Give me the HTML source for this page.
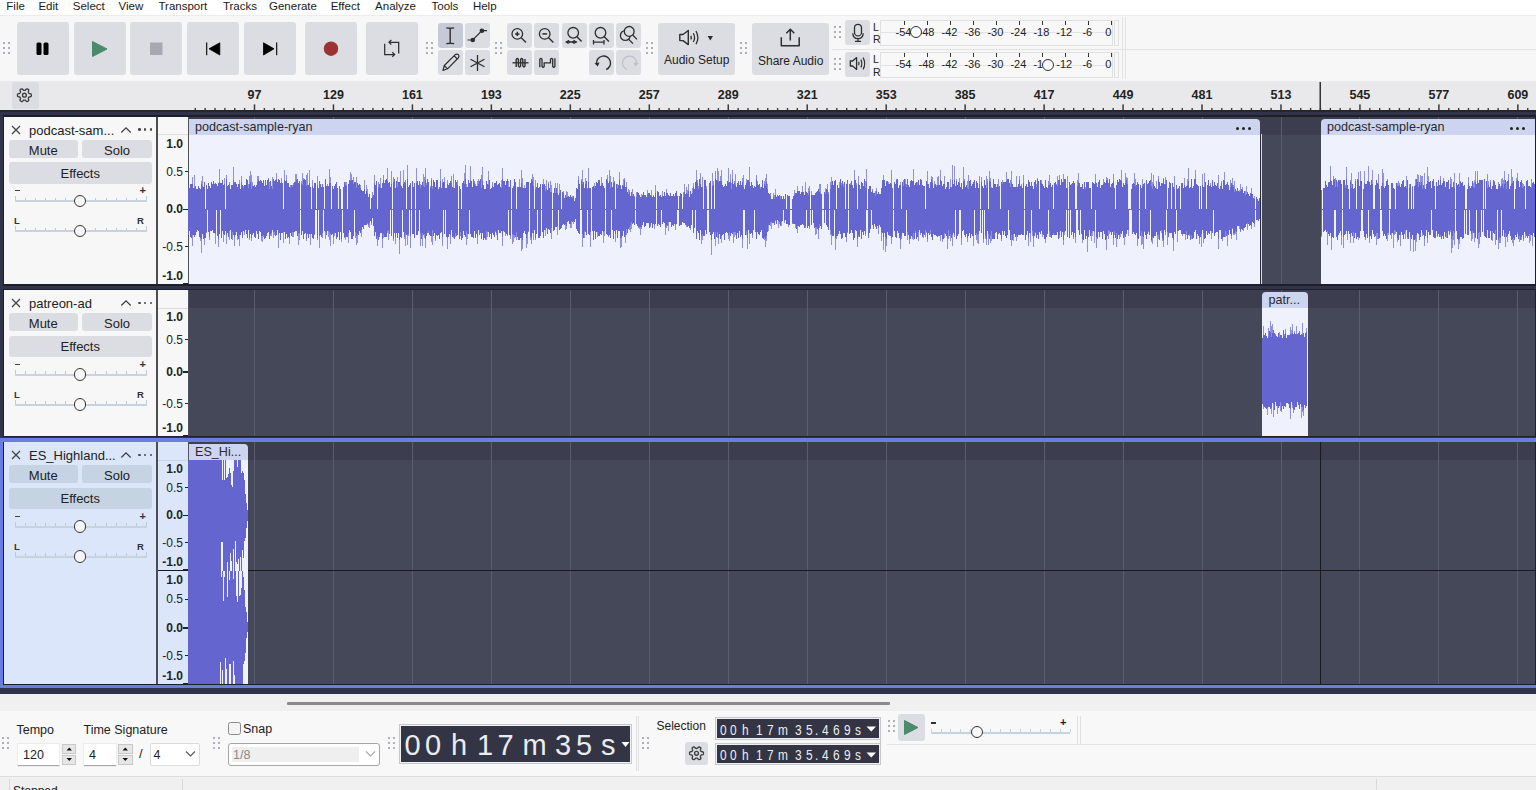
<!DOCTYPE html><html><head><meta charset="utf-8"><style>
*{margin:0;padding:0;box-sizing:border-box}
html,body{width:1536px;height:790px;overflow:hidden}
body{position:relative;background:#f0f0f0;font-family:"Liberation Sans", sans-serif;color:#222;}
.a{position:absolute}
.dot{width:2.2px;height:2.2px;background:#9597a6;border-radius:50%}
.btn{position:absolute;background:#dcdde2;border-radius:3px}
.t{position:absolute;white-space:nowrap;line-height:1}
</style></head><body><div class="a" style="left:0;top:0;width:1536px;height:15px;background:#fff"></div><div class="t" style="left:6.3px;top:1px;font-size:11.5px;color:#1a1a1a">File</div><div class="t" style="left:38.4px;top:1px;font-size:11.5px;color:#1a1a1a">Edit</div><div class="t" style="left:72.8px;top:1px;font-size:11.5px;color:#1a1a1a">Select</div><div class="t" style="left:118.5px;top:1px;font-size:11.5px;color:#1a1a1a">View</div><div class="t" style="left:158.5px;top:1px;font-size:11.5px;color:#1a1a1a">Transport</div><div class="t" style="left:222.9px;top:1px;font-size:11.5px;color:#1a1a1a">Tracks</div><div class="t" style="left:269.0px;top:1px;font-size:11.5px;color:#1a1a1a">Generate</div><div class="t" style="left:330.7px;top:1px;font-size:11.5px;color:#1a1a1a">Effect</div><div class="t" style="left:375.1px;top:1px;font-size:11.5px;color:#1a1a1a">Analyze</div><div class="t" style="left:431.5px;top:1px;font-size:11.5px;color:#1a1a1a">Tools</div><div class="t" style="left:472.9px;top:1px;font-size:11.5px;color:#1a1a1a">Help</div><div class="a" style="left:0;top:15px;width:1536px;height:66px;background:#f7f7f7;border-top:1px solid #ececec"></div><div class="a dot" style="left:3px;top:42px"></div><div class="a dot" style="left:8px;top:42px"></div><div class="a dot" style="left:3px;top:47px"></div><div class="a dot" style="left:8px;top:47px"></div><div class="a dot" style="left:3px;top:52px"></div><div class="a dot" style="left:8px;top:52px"></div><div class="btn" style="left:17px;top:22px;width:52px;height:53px"></div><div class="btn" style="left:73.5px;top:22px;width:52px;height:53px"></div><div class="btn" style="left:130px;top:22px;width:52px;height:53px"></div><div class="btn" style="left:187px;top:22px;width:52px;height:53px"></div><div class="btn" style="left:244px;top:22px;width:52px;height:53px"></div><div class="btn" style="left:305px;top:22px;width:52px;height:53px"></div><div class="btn" style="left:366px;top:22px;width:52px;height:53px"></div><svg class="a" style="left:0;top:0" width="430" height="80"><rect x="36.5" y="42.5" width="5" height="12.5" rx="1.5" fill="#000"/><rect x="43.5" y="42.5" width="5" height="12.5" rx="1.5" fill="#000"/><path d="M92.5 41.5 L107 49 L92.5 56.5 Z" fill="#4b8a6b" stroke="#4b8a6b" stroke-width="1" stroke-linejoin="round"/><rect x="150" y="42.5" width="12.5" height="12.5" fill="#a6a9b2"/><rect x="206" y="42.3" width="1.3" height="13" rx="0.6" fill="#222"/><path d="M209 48.8 L219.8 42.8 L219.8 55 Z" fill="#000" stroke="#000" stroke-width="0.8" stroke-linejoin="round"/><path d="M263.5 42.8 L274 48.8 L263.5 55 Z" fill="#000" stroke="#000" stroke-width="0.8" stroke-linejoin="round"/><rect x="276" y="42.3" width="1.3" height="13" rx="0.6" fill="#222"/><circle cx="331" cy="48.7" r="7.2" fill="#9c3232"/></svg><div class="a dot" style="left:426px;top:42px"></div><div class="a dot" style="left:431px;top:42px"></div><div class="a dot" style="left:426px;top:47px"></div><div class="a dot" style="left:431px;top:47px"></div><div class="a dot" style="left:426px;top:52px"></div><div class="a dot" style="left:431px;top:52px"></div><div class="btn" style="left:437.5px;top:22.5px;width:25px;height:25px;background:#c6c9d6"></div><div class="btn" style="left:465px;top:22.5px;width:25px;height:25px;background:#dcdde2"></div><div class="btn" style="left:437.5px;top:50px;width:25px;height:25px;background:#dcdde2"></div><div class="btn" style="left:465px;top:50px;width:25px;height:25px;background:#dcdde2"></div><div class="a dot" style="left:495px;top:42px"></div><div class="a dot" style="left:500px;top:42px"></div><div class="a dot" style="left:495px;top:47px"></div><div class="a dot" style="left:500px;top:47px"></div><div class="a dot" style="left:495px;top:52px"></div><div class="a dot" style="left:500px;top:52px"></div><div class="btn" style="left:507px;top:22.5px;width:25px;height:25px"></div><div class="btn" style="left:534px;top:22.5px;width:25px;height:25px"></div><div class="btn" style="left:561.5px;top:22.5px;width:25px;height:25px"></div><div class="btn" style="left:589px;top:22.5px;width:25px;height:25px"></div><div class="btn" style="left:616px;top:22.5px;width:25px;height:25px"></div><div class="btn" style="left:507px;top:50px;width:25px;height:25px"></div><div class="btn" style="left:534px;top:50px;width:25px;height:25px"></div><div class="btn" style="left:589px;top:50px;width:25px;height:25px"></div><div class="btn" style="left:616px;top:50px;width:25px;height:25px"></div><div class="a dot" style="left:646px;top:42px"></div><div class="a dot" style="left:651px;top:42px"></div><div class="a dot" style="left:646px;top:47px"></div><div class="a dot" style="left:651px;top:47px"></div><div class="a dot" style="left:646px;top:52px"></div><div class="a dot" style="left:651px;top:52px"></div><div class="btn" style="left:658px;top:22.5px;width:77px;height:52.5px"></div><div class="t" style="left:664px;top:54px;font-size:12px;color:#222">Audio Setup</div><div class="a dot" style="left:740px;top:42px"></div><div class="a dot" style="left:745px;top:42px"></div><div class="a dot" style="left:740px;top:47px"></div><div class="a dot" style="left:745px;top:47px"></div><div class="a dot" style="left:740px;top:52px"></div><div class="a dot" style="left:745px;top:52px"></div><div class="btn" style="left:752px;top:22.5px;width:77px;height:52.5px"></div><div class="t" style="left:758px;top:55px;font-size:12px;color:#222">Share Audio</div><div class="a dot" style="left:834px;top:26px"></div><div class="a dot" style="left:839px;top:26px"></div><div class="a dot" style="left:834px;top:31px"></div><div class="a dot" style="left:839px;top:31px"></div><div class="a dot" style="left:834px;top:36px"></div><div class="a dot" style="left:839px;top:36px"></div><div class="a dot" style="left:834px;top:58px"></div><div class="a dot" style="left:839px;top:58px"></div><div class="a dot" style="left:834px;top:63px"></div><div class="a dot" style="left:839px;top:63px"></div><div class="a dot" style="left:834px;top:68px"></div><div class="a dot" style="left:839px;top:68px"></div><div class="a" style="left:832px;top:49px;width:704px;height:1px;background:#e2e2e2"></div><div class="btn" style="left:845px;top:19.5px;width:25px;height:25px"></div><div class="btn" style="left:845px;top:52px;width:25px;height:25px"></div><div class="a" style="left:880px;top:19.6px;width:233px;height:26px;border:1px solid #e0e0e3;background:#f8f8f8"></div><div class="a" style="left:881px;top:32.1px;width:231px;height:1px;background:#e3e3e6"></div><div class="a" style="left:1114px;top:19.6px;width:5px;height:26px;border:1px solid #e0e0e3"></div><div class="t" style="left:873px;top:21.6px;font-size:10.5px">L</div><div class="t" style="left:873px;top:34.1px;font-size:10.5px">R</div><div class="a" style="left:904.0px;top:20.6px;width:1px;height:4px;background:#333"></div><div class="t" style="left:888.5px;width:30px;text-align:center;top:26.6px;font-size:11px;color:#222">-54</div><div class="a" style="left:927.0px;top:20.6px;width:1px;height:4px;background:#333"></div><div class="t" style="left:911.5px;width:30px;text-align:center;top:26.6px;font-size:11px;color:#222">-48</div><div class="a" style="left:950.0px;top:20.6px;width:1px;height:4px;background:#333"></div><div class="t" style="left:934.5px;width:30px;text-align:center;top:26.6px;font-size:11px;color:#222">-42</div><div class="a" style="left:972.9px;top:20.6px;width:1px;height:4px;background:#333"></div><div class="t" style="left:957.4px;width:30px;text-align:center;top:26.6px;font-size:11px;color:#222">-36</div><div class="a" style="left:995.9px;top:20.6px;width:1px;height:4px;background:#333"></div><div class="t" style="left:980.4px;width:30px;text-align:center;top:26.6px;font-size:11px;color:#222">-30</div><div class="a" style="left:1018.9px;top:20.6px;width:1px;height:4px;background:#333"></div><div class="t" style="left:1003.4px;width:30px;text-align:center;top:26.6px;font-size:11px;color:#222">-24</div><div class="a" style="left:1041.9px;top:20.6px;width:1px;height:4px;background:#333"></div><div class="t" style="left:1026.4px;width:30px;text-align:center;top:26.6px;font-size:11px;color:#222">-18</div><div class="a" style="left:1064.8px;top:20.6px;width:1px;height:4px;background:#333"></div><div class="t" style="left:1049.3px;width:30px;text-align:center;top:26.6px;font-size:11px;color:#222">-12</div><div class="a" style="left:1087.8px;top:20.6px;width:1px;height:4px;background:#333"></div><div class="t" style="left:1072.3px;width:30px;text-align:center;top:26.6px;font-size:11px;color:#222">-6</div><div class="a" style="left:1110.8px;top:20.6px;width:1px;height:4px;background:#333"></div><div class="t" style="left:1093.3px;width:30px;text-align:center;top:26.6px;font-size:11px;color:#222">0</div><div class="a" style="left:909.5px;top:26.1px;width:12px;height:12px;border:1.5px solid #333;border-radius:50%;background:#f8f8f8"></div><div class="a" style="left:880px;top:52px;width:233px;height:26px;border:1px solid #e0e0e3;background:#f8f8f8"></div><div class="a" style="left:881px;top:64.5px;width:231px;height:1px;background:#e3e3e6"></div><div class="a" style="left:1114px;top:52px;width:5px;height:26px;border:1px solid #e0e0e3"></div><div class="t" style="left:873px;top:54px;font-size:10.5px">L</div><div class="t" style="left:873px;top:66.5px;font-size:10.5px">R</div><div class="a" style="left:904.0px;top:53px;width:1px;height:4px;background:#333"></div><div class="t" style="left:888.5px;width:30px;text-align:center;top:59px;font-size:11px;color:#222">-54</div><div class="a" style="left:927.0px;top:53px;width:1px;height:4px;background:#333"></div><div class="t" style="left:911.5px;width:30px;text-align:center;top:59px;font-size:11px;color:#222">-48</div><div class="a" style="left:950.0px;top:53px;width:1px;height:4px;background:#333"></div><div class="t" style="left:934.5px;width:30px;text-align:center;top:59px;font-size:11px;color:#222">-42</div><div class="a" style="left:972.9px;top:53px;width:1px;height:4px;background:#333"></div><div class="t" style="left:957.4px;width:30px;text-align:center;top:59px;font-size:11px;color:#222">-36</div><div class="a" style="left:995.9px;top:53px;width:1px;height:4px;background:#333"></div><div class="t" style="left:980.4px;width:30px;text-align:center;top:59px;font-size:11px;color:#222">-30</div><div class="a" style="left:1018.9px;top:53px;width:1px;height:4px;background:#333"></div><div class="t" style="left:1003.4px;width:30px;text-align:center;top:59px;font-size:11px;color:#222">-24</div><div class="a" style="left:1041.9px;top:53px;width:1px;height:4px;background:#333"></div><div class="t" style="left:1026.4px;width:30px;text-align:center;top:59px;font-size:11px;color:#222">-18</div><div class="a" style="left:1064.8px;top:53px;width:1px;height:4px;background:#333"></div><div class="t" style="left:1049.3px;width:30px;text-align:center;top:59px;font-size:11px;color:#222">-12</div><div class="a" style="left:1087.8px;top:53px;width:1px;height:4px;background:#333"></div><div class="t" style="left:1072.3px;width:30px;text-align:center;top:59px;font-size:11px;color:#222">-6</div><div class="a" style="left:1110.8px;top:53px;width:1px;height:4px;background:#333"></div><div class="t" style="left:1093.3px;width:30px;text-align:center;top:59px;font-size:11px;color:#222">0</div><div class="a" style="left:1042px;top:58.5px;width:12px;height:12px;border:1.5px solid #333;border-radius:50%;background:#f8f8f8"></div><div class="a" style="left:1122px;top:17px;width:1px;height:62px;background:#e2e2e2"></div><div class="a" style="left:1125px;top:17px;width:1px;height:62px;background:#e2e2e2"></div><div class="a" style="left:0;top:81px;width:1536px;height:30px;background:#e9e9ec"></div><div class="btn" style="left:11.5px;top:82px;width:27px;height:27px"></div><svg class="a" style="left:0;top:81px" width="1536" height="30"><rect x="194.58" y="27" width="1.4" height="3" fill="#3a3a3a"/><rect x="204.45" y="27" width="1.4" height="3" fill="#3a3a3a"/><rect x="214.32" y="27" width="1.4" height="3" fill="#3a3a3a"/><rect x="224.19" y="27" width="1.4" height="3" fill="#3a3a3a"/><rect x="234.06" y="27" width="1.4" height="3" fill="#3a3a3a"/><rect x="243.93" y="27" width="1.4" height="3" fill="#3a3a3a"/><rect x="253.75" y="23.4" width="1.5" height="6.6" fill="#3a3a3a"/><rect x="263.67" y="27" width="1.4" height="3" fill="#3a3a3a"/><rect x="273.54" y="27" width="1.4" height="3" fill="#3a3a3a"/><rect x="283.41" y="27" width="1.4" height="3" fill="#3a3a3a"/><rect x="293.28" y="27" width="1.4" height="3" fill="#3a3a3a"/><rect x="303.15" y="27" width="1.4" height="3" fill="#3a3a3a"/><rect x="313.02" y="27" width="1.4" height="3" fill="#3a3a3a"/><rect x="322.89" y="27" width="1.4" height="3" fill="#3a3a3a"/><rect x="332.71" y="23.4" width="1.5" height="6.6" fill="#3a3a3a"/><rect x="342.63" y="27" width="1.4" height="3" fill="#3a3a3a"/><rect x="352.50" y="27" width="1.4" height="3" fill="#3a3a3a"/><rect x="362.37" y="27" width="1.4" height="3" fill="#3a3a3a"/><rect x="372.24" y="27" width="1.4" height="3" fill="#3a3a3a"/><rect x="382.11" y="27" width="1.4" height="3" fill="#3a3a3a"/><rect x="391.98" y="27" width="1.4" height="3" fill="#3a3a3a"/><rect x="401.85" y="27" width="1.4" height="3" fill="#3a3a3a"/><rect x="411.67" y="23.4" width="1.5" height="6.6" fill="#3a3a3a"/><rect x="421.59" y="27" width="1.4" height="3" fill="#3a3a3a"/><rect x="431.46" y="27" width="1.4" height="3" fill="#3a3a3a"/><rect x="441.33" y="27" width="1.4" height="3" fill="#3a3a3a"/><rect x="451.20" y="27" width="1.4" height="3" fill="#3a3a3a"/><rect x="461.07" y="27" width="1.4" height="3" fill="#3a3a3a"/><rect x="470.94" y="27" width="1.4" height="3" fill="#3a3a3a"/><rect x="480.81" y="27" width="1.4" height="3" fill="#3a3a3a"/><rect x="490.63" y="23.4" width="1.5" height="6.6" fill="#3a3a3a"/><rect x="500.55" y="27" width="1.4" height="3" fill="#3a3a3a"/><rect x="510.42" y="27" width="1.4" height="3" fill="#3a3a3a"/><rect x="520.29" y="27" width="1.4" height="3" fill="#3a3a3a"/><rect x="530.16" y="27" width="1.4" height="3" fill="#3a3a3a"/><rect x="540.03" y="27" width="1.4" height="3" fill="#3a3a3a"/><rect x="549.90" y="27" width="1.4" height="3" fill="#3a3a3a"/><rect x="559.77" y="27" width="1.4" height="3" fill="#3a3a3a"/><rect x="569.59" y="23.4" width="1.5" height="6.6" fill="#3a3a3a"/><rect x="579.51" y="27" width="1.4" height="3" fill="#3a3a3a"/><rect x="589.38" y="27" width="1.4" height="3" fill="#3a3a3a"/><rect x="599.25" y="27" width="1.4" height="3" fill="#3a3a3a"/><rect x="609.12" y="27" width="1.4" height="3" fill="#3a3a3a"/><rect x="618.99" y="27" width="1.4" height="3" fill="#3a3a3a"/><rect x="628.86" y="27" width="1.4" height="3" fill="#3a3a3a"/><rect x="638.73" y="27" width="1.4" height="3" fill="#3a3a3a"/><rect x="648.55" y="23.4" width="1.5" height="6.6" fill="#3a3a3a"/><rect x="658.47" y="27" width="1.4" height="3" fill="#3a3a3a"/><rect x="668.34" y="27" width="1.4" height="3" fill="#3a3a3a"/><rect x="678.21" y="27" width="1.4" height="3" fill="#3a3a3a"/><rect x="688.08" y="27" width="1.4" height="3" fill="#3a3a3a"/><rect x="697.95" y="27" width="1.4" height="3" fill="#3a3a3a"/><rect x="707.82" y="27" width="1.4" height="3" fill="#3a3a3a"/><rect x="717.69" y="27" width="1.4" height="3" fill="#3a3a3a"/><rect x="727.51" y="23.4" width="1.5" height="6.6" fill="#3a3a3a"/><rect x="737.43" y="27" width="1.4" height="3" fill="#3a3a3a"/><rect x="747.30" y="27" width="1.4" height="3" fill="#3a3a3a"/><rect x="757.17" y="27" width="1.4" height="3" fill="#3a3a3a"/><rect x="767.04" y="27" width="1.4" height="3" fill="#3a3a3a"/><rect x="776.91" y="27" width="1.4" height="3" fill="#3a3a3a"/><rect x="786.78" y="27" width="1.4" height="3" fill="#3a3a3a"/><rect x="796.65" y="27" width="1.4" height="3" fill="#3a3a3a"/><rect x="806.47" y="23.4" width="1.5" height="6.6" fill="#3a3a3a"/><rect x="816.39" y="27" width="1.4" height="3" fill="#3a3a3a"/><rect x="826.26" y="27" width="1.4" height="3" fill="#3a3a3a"/><rect x="836.13" y="27" width="1.4" height="3" fill="#3a3a3a"/><rect x="846.00" y="27" width="1.4" height="3" fill="#3a3a3a"/><rect x="855.87" y="27" width="1.4" height="3" fill="#3a3a3a"/><rect x="865.74" y="27" width="1.4" height="3" fill="#3a3a3a"/><rect x="875.61" y="27" width="1.4" height="3" fill="#3a3a3a"/><rect x="885.43" y="23.4" width="1.5" height="6.6" fill="#3a3a3a"/><rect x="895.35" y="27" width="1.4" height="3" fill="#3a3a3a"/><rect x="905.22" y="27" width="1.4" height="3" fill="#3a3a3a"/><rect x="915.09" y="27" width="1.4" height="3" fill="#3a3a3a"/><rect x="924.96" y="27" width="1.4" height="3" fill="#3a3a3a"/><rect x="934.83" y="27" width="1.4" height="3" fill="#3a3a3a"/><rect x="944.70" y="27" width="1.4" height="3" fill="#3a3a3a"/><rect x="954.57" y="27" width="1.4" height="3" fill="#3a3a3a"/><rect x="964.39" y="23.4" width="1.5" height="6.6" fill="#3a3a3a"/><rect x="974.31" y="27" width="1.4" height="3" fill="#3a3a3a"/><rect x="984.18" y="27" width="1.4" height="3" fill="#3a3a3a"/><rect x="994.05" y="27" width="1.4" height="3" fill="#3a3a3a"/><rect x="1003.92" y="27" width="1.4" height="3" fill="#3a3a3a"/><rect x="1013.79" y="27" width="1.4" height="3" fill="#3a3a3a"/><rect x="1023.66" y="27" width="1.4" height="3" fill="#3a3a3a"/><rect x="1033.53" y="27" width="1.4" height="3" fill="#3a3a3a"/><rect x="1043.35" y="23.4" width="1.5" height="6.6" fill="#3a3a3a"/><rect x="1053.27" y="27" width="1.4" height="3" fill="#3a3a3a"/><rect x="1063.14" y="27" width="1.4" height="3" fill="#3a3a3a"/><rect x="1073.01" y="27" width="1.4" height="3" fill="#3a3a3a"/><rect x="1082.88" y="27" width="1.4" height="3" fill="#3a3a3a"/><rect x="1092.75" y="27" width="1.4" height="3" fill="#3a3a3a"/><rect x="1102.62" y="27" width="1.4" height="3" fill="#3a3a3a"/><rect x="1112.49" y="27" width="1.4" height="3" fill="#3a3a3a"/><rect x="1122.31" y="23.4" width="1.5" height="6.6" fill="#3a3a3a"/><rect x="1132.23" y="27" width="1.4" height="3" fill="#3a3a3a"/><rect x="1142.10" y="27" width="1.4" height="3" fill="#3a3a3a"/><rect x="1151.97" y="27" width="1.4" height="3" fill="#3a3a3a"/><rect x="1161.84" y="27" width="1.4" height="3" fill="#3a3a3a"/><rect x="1171.71" y="27" width="1.4" height="3" fill="#3a3a3a"/><rect x="1181.58" y="27" width="1.4" height="3" fill="#3a3a3a"/><rect x="1191.45" y="27" width="1.4" height="3" fill="#3a3a3a"/><rect x="1201.27" y="23.4" width="1.5" height="6.6" fill="#3a3a3a"/><rect x="1211.19" y="27" width="1.4" height="3" fill="#3a3a3a"/><rect x="1221.06" y="27" width="1.4" height="3" fill="#3a3a3a"/><rect x="1230.93" y="27" width="1.4" height="3" fill="#3a3a3a"/><rect x="1240.80" y="27" width="1.4" height="3" fill="#3a3a3a"/><rect x="1250.67" y="27" width="1.4" height="3" fill="#3a3a3a"/><rect x="1260.54" y="27" width="1.4" height="3" fill="#3a3a3a"/><rect x="1270.41" y="27" width="1.4" height="3" fill="#3a3a3a"/><rect x="1280.23" y="23.4" width="1.5" height="6.6" fill="#3a3a3a"/><rect x="1290.15" y="27" width="1.4" height="3" fill="#3a3a3a"/><rect x="1300.02" y="27" width="1.4" height="3" fill="#3a3a3a"/><rect x="1309.89" y="27" width="1.4" height="3" fill="#3a3a3a"/><rect x="1319.76" y="27" width="1.4" height="3" fill="#3a3a3a"/><rect x="1329.63" y="27" width="1.4" height="3" fill="#3a3a3a"/><rect x="1339.50" y="27" width="1.4" height="3" fill="#3a3a3a"/><rect x="1349.37" y="27" width="1.4" height="3" fill="#3a3a3a"/><rect x="1359.19" y="23.4" width="1.5" height="6.6" fill="#3a3a3a"/><rect x="1369.11" y="27" width="1.4" height="3" fill="#3a3a3a"/><rect x="1378.98" y="27" width="1.4" height="3" fill="#3a3a3a"/><rect x="1388.85" y="27" width="1.4" height="3" fill="#3a3a3a"/><rect x="1398.72" y="27" width="1.4" height="3" fill="#3a3a3a"/><rect x="1408.59" y="27" width="1.4" height="3" fill="#3a3a3a"/><rect x="1418.46" y="27" width="1.4" height="3" fill="#3a3a3a"/><rect x="1428.33" y="27" width="1.4" height="3" fill="#3a3a3a"/><rect x="1438.15" y="23.4" width="1.5" height="6.6" fill="#3a3a3a"/><rect x="1448.07" y="27" width="1.4" height="3" fill="#3a3a3a"/><rect x="1457.94" y="27" width="1.4" height="3" fill="#3a3a3a"/><rect x="1467.81" y="27" width="1.4" height="3" fill="#3a3a3a"/><rect x="1477.68" y="27" width="1.4" height="3" fill="#3a3a3a"/><rect x="1487.55" y="27" width="1.4" height="3" fill="#3a3a3a"/><rect x="1497.42" y="27" width="1.4" height="3" fill="#3a3a3a"/><rect x="1507.29" y="27" width="1.4" height="3" fill="#3a3a3a"/><rect x="1517.11" y="23.4" width="1.5" height="6.6" fill="#3a3a3a"/><rect x="1527.03" y="27" width="1.4" height="3" fill="#3a3a3a"/><rect x="1319.5" y="1" width="1.5" height="29" fill="#333"/></svg><div class="t" style="left:234.5px;width:40px;text-align:center;top:89px;font-size:12.5px;font-weight:bold;color:#222">97</div><div class="t" style="left:313.5px;width:40px;text-align:center;top:89px;font-size:12.5px;font-weight:bold;color:#222">129</div><div class="t" style="left:392.4px;width:40px;text-align:center;top:89px;font-size:12.5px;font-weight:bold;color:#222">161</div><div class="t" style="left:471.4px;width:40px;text-align:center;top:89px;font-size:12.5px;font-weight:bold;color:#222">193</div><div class="t" style="left:550.3px;width:40px;text-align:center;top:89px;font-size:12.5px;font-weight:bold;color:#222">225</div><div class="t" style="left:629.3px;width:40px;text-align:center;top:89px;font-size:12.5px;font-weight:bold;color:#222">257</div><div class="t" style="left:708.3px;width:40px;text-align:center;top:89px;font-size:12.5px;font-weight:bold;color:#222">289</div><div class="t" style="left:787.2px;width:40px;text-align:center;top:89px;font-size:12.5px;font-weight:bold;color:#222">321</div><div class="t" style="left:866.2px;width:40px;text-align:center;top:89px;font-size:12.5px;font-weight:bold;color:#222">353</div><div class="t" style="left:945.1px;width:40px;text-align:center;top:89px;font-size:12.5px;font-weight:bold;color:#222">385</div><div class="t" style="left:1024.1px;width:40px;text-align:center;top:89px;font-size:12.5px;font-weight:bold;color:#222">417</div><div class="t" style="left:1103.1px;width:40px;text-align:center;top:89px;font-size:12.5px;font-weight:bold;color:#222">449</div><div class="t" style="left:1182.0px;width:40px;text-align:center;top:89px;font-size:12.5px;font-weight:bold;color:#222">481</div><div class="t" style="left:1261.0px;width:40px;text-align:center;top:89px;font-size:12.5px;font-weight:bold;color:#222">513</div><div class="t" style="left:1339.9px;width:40px;text-align:center;top:89px;font-size:12.5px;font-weight:bold;color:#222">545</div><div class="t" style="left:1418.9px;width:40px;text-align:center;top:89px;font-size:12.5px;font-weight:bold;color:#222">577</div><div class="t" style="left:1497.9px;width:40px;text-align:center;top:89px;font-size:12.5px;font-weight:bold;color:#222">609</div><svg class="a" style="left:0;top:0" width="1536" height="120"><path d="M450.2 28.2 V43.2 M446.3 27.9 Q450.2 28.6 454.1 27.9 M446.3 43.6 Q450.2 42.8 454.1 43.6" fill="none" stroke="#2e2e2e" stroke-width="1.4"/><path d="M467.5 40 H472.8 L481.9 30.7 H487" fill="none" stroke="#2e2e2e" stroke-width="1.2"/><circle cx="472.8" cy="40" r="2.3" fill="#2e2e2e"/><circle cx="481.9" cy="30.7" r="2.3" fill="#2e2e2e"/><path d="M443 70.5 L444.3 65.5 L455 54.8 Q457 53.3 458.4 54.7 Q459.7 56.2 458.2 58 L447.5 68.8 Z M444.3 65.5 L447.5 68.8 M454.2 55.8 L457.3 59" fill="none" stroke="#2e2e2e" stroke-width="1.2" stroke-linejoin="round"/><path d="M477.5 55 V71 M470.5 59.2 L484.5 66.8 M470.5 66.8 L484.5 59.2" fill="none" stroke="#2e2e2e" stroke-width="1.3"/><circle cx="517.3" cy="33.9" r="5.3" fill="none" stroke="#2e2e2e" stroke-width="1.3"/><path d="M521.1999999999999 37.8 L526.0 42.4" stroke="#2e2e2e" stroke-width="1.4"/><path d="M515.0999999999999 33.9 H519.5 M517.3 31.7 V36.1" stroke="#2e2e2e" stroke-width="1.5"/><circle cx="544.7" cy="33.9" r="5.3" fill="none" stroke="#2e2e2e" stroke-width="1.3"/><path d="M548.6 37.8 L553.4000000000001 42.4" stroke="#2e2e2e" stroke-width="1.4"/><path d="M542.3000000000001 33.9 H547.1" stroke="#2e2e2e" stroke-width="1.5"/><circle cx="573.2" cy="32.8" r="5.3" fill="none" stroke="#2e2e2e" stroke-width="1.3"/><path d="M577 36.7 L581.6 41.6" stroke="#2e2e2e" stroke-width="1.4"/><path d="M566 42 H576.5" stroke="#2e2e2e" stroke-width="1.2"/><path d="M565 42 L568.5 40 V44Z M577.5 42 L574 40 V44Z M571.2 42 L568.2 40 V44 Z M571.2 42 L574.2 40 V44Z" fill="#2e2e2e"/><circle cx="600.5" cy="32.8" r="5.3" fill="none" stroke="#2e2e2e" stroke-width="1.3"/><path d="M604.3 36.7 L608.9 41.6" stroke="#2e2e2e" stroke-width="1.4"/><path d="M593.5 42.2 H604 M593.5 40 V44.5 M604 40 V44.5" stroke="#2e2e2e" stroke-width="1.3"/><circle cx="625.3" cy="35.5" r="4.9" fill="none" stroke="#2e2e2e" stroke-width="1.3"/><path d="M628.6 39.2 L633 43.6" stroke="#2e2e2e" stroke-width="1.3"/><circle cx="629.2" cy="31.4" r="4.9" fill="#dcdde2" stroke="#2e2e2e" stroke-width="1.3"/><path d="M632.7 35 L637 39.4" stroke="#2e2e2e" stroke-width="1.3"/><path d="M512.5 62.8 H528.5" stroke="#2e2e2e" stroke-width="1.3"/><path d="M516.2 67 V59.5 Q517.3 57.6 518.4 59.5 V66 Q519.5 68 520.6 66 V59.5 Q521.7 57.6 522.8 59.5 V66 Q523.9 68 525 66 V59" fill="none" stroke="#2e2e2e" stroke-width="1.4"/><path d="M539.8 67.3 V59.3 Q540.9 57.5 542 59.3 V66.3 Q543.1 68.2 544.2 66.3 V62.8 H550.5 V59.3 Q551.6 57.5 552.7 59.3 V66.3 Q553.8 68.2 554.9 66.3 V58.3" fill="none" stroke="#2e2e2e" stroke-width="1.3"/><path d="M596.5 63.2 A7 7 0 1 1 606.2 69.5" fill="none" stroke="#2e2e2e" stroke-width="1.4"/><path d="M594.4 63.2 L599.5 62.5 L597.8 66.6 Z" fill="#2e2e2e"/><path d="M636.5 63.2 A7 7 0 1 0 626.8 69.5" fill="none" stroke="#b9c0cc" stroke-width="1.2"/><path d="M638.6 63.2 L633.5 62.5 L635.2 66.6 Z" fill="#b9c0cc"/><path d="M384.7 43.8 V54.5 H394.5 M389 42.3 H398.7 V53.5" fill="none" stroke="#2e2e2e" stroke-width="1.25"/><path d="M391.3 40 L389 42.3 L391.3 44.6 M392.3 52.2 L394.6 54.5 L392.3 56.8" fill="none" stroke="#2e2e2e" stroke-width="1.25"/><path d="M679.8 34.5 H683 L688.3 30.5 V44.6 L683 40.6 H679.8 Z" fill="none" stroke="#2e2e2e" stroke-width="1.4" stroke-linejoin="round"/><path d="M690.8 35.8 Q691.8 37.6 690.8 39.4 M693.3 33.2 Q695.8 37.6 693.3 42 M696 31 Q699.7 37.6 696 44.2" fill="none" stroke="#2e2e2e" stroke-width="1.3"/><path d="M707.6 36 H713 L710.3 40.5 Z" fill="#2e2e2e"/><path d="M781.3 37.3 V45.8 H799.2 V37.3" fill="none" stroke="#2e2e2e" stroke-width="1.5" stroke-linejoin="round"/><path d="M790.3 40.5 V29.5 M786.3 33.2 L790.3 29.2 L794.3 33.2" fill="none" stroke="#2e2e2e" stroke-width="1.5"/><rect x="854.5" y="24.3" width="7" height="11.6" rx="3.5" fill="none" stroke="#2e2e2e" stroke-width="1.3"/><path d="M852.8 33.2 Q853 38.6 858 38.6 Q863 38.6 863.2 33.2 M858 38.6 V41.2 M855 41.3 H861" fill="none" stroke="#2e2e2e" stroke-width="1.3"/><path d="M850.3 61 H852.6 L856.6 57.6 V69.4 L852.6 66 H850.3 Z" fill="none" stroke="#2e2e2e" stroke-width="1.3" stroke-linejoin="round"/><path d="M858.6 61.8 Q859.4 63.5 858.6 65.2 M860.8 59.6 Q862.9 63.5 860.8 67.4 M863.1 57.6 Q866.3 63.5 863.1 69.4" fill="none" stroke="#2e2e2e" stroke-width="1.2"/><path d="M31.35 95.20L31.33 95.56L31.28 95.92L31.14 96.27L30.79 96.56L30.10 96.73L29.41 96.83L29.04 96.98L28.86 97.19L28.73 97.40L28.60 97.62L28.47 97.84L28.35 98.07L28.27 98.33L28.31 98.72L28.57 99.37L28.77 100.06L28.70 100.50L28.47 100.80L28.18 101.02L27.88 101.22L27.55 101.39L27.21 101.52L26.85 101.57L26.42 101.42L25.93 100.90L25.49 100.35L25.18 100.11L24.91 100.06L24.65 100.05L24.40 100.05L24.15 100.05L23.89 100.06L23.62 100.11L23.31 100.35L22.87 100.90L22.38 101.42L21.95 101.57L21.59 101.52L21.25 101.39L20.93 101.22L20.62 101.02L20.33 100.80L20.10 100.50L20.03 100.06L20.23 99.37L20.49 98.72L20.53 98.33L20.45 98.07L20.33 97.84L20.20 97.62L20.07 97.40L19.94 97.19L19.76 96.98L19.39 96.83L18.70 96.73L18.01 96.56L17.66 96.27L17.52 95.92L17.47 95.56L17.45 95.20L17.47 94.84L17.52 94.48L17.66 94.13L18.01 93.84L18.70 93.67L19.39 93.57L19.76 93.42L19.94 93.21L20.07 93.00L20.20 92.78L20.33 92.56L20.45 92.33L20.53 92.07L20.49 91.68L20.23 91.03L20.03 90.34L20.10 89.90L20.33 89.60L20.62 89.38L20.92 89.18L21.25 89.01L21.59 88.88L21.95 88.83L22.38 88.98L22.87 89.50L23.31 90.05L23.62 90.29L23.89 90.34L24.15 90.35L24.40 90.35L24.65 90.35L24.91 90.34L25.18 90.29L25.49 90.05L25.93 89.50L26.42 88.98L26.85 88.83L27.21 88.88L27.55 89.01L27.88 89.18L28.18 89.38L28.47 89.60L28.70 89.90L28.77 90.34L28.57 91.03L28.31 91.68L28.27 92.07L28.35 92.33L28.47 92.56L28.60 92.78L28.73 93.00L28.86 93.21L29.04 93.42L29.41 93.57L30.10 93.67L30.79 93.84L31.14 94.13L31.28 94.48L31.33 94.84L31.35 95.20Z" fill="none" stroke="#3d3d3d" stroke-width="1.35"/><circle cx="24.4" cy="95.2" r="1.9" fill="none" stroke="#3d3d3d" stroke-width="1.35"/></svg><div class="a" style="left:0;top:110.5px;width:1536px;height:583.5px;background:#30334a"></div><div class="a" style="left:0;top:110.4px;width:1536px;height:1.3px;background:#25262e"></div><div class="a" style="left:3px;top:115px;width:1533px;height:170.5px;background:#1d1f29"></div><div class="a" style="left:4px;top:116.5px;width:152px;height:167.5px;background:#f7f7f7"></div><svg class="a" style="left:11px;top:124.5px" width="10" height="10"><path d="M1 1 L9 9 M9 1 L1 9" fill="none" stroke="#444" stroke-width="1.3"/></svg><div class="t" style="left:29px;top:123.5px;font-size:13px;color:#222">podcast-sam...</div><svg class="a" style="left:120px;top:125.5px" width="12" height="8"><path d="M1.3 6.5 L6 1.8 L10.7 6.5" fill="none" stroke="#3a3a3a" stroke-width="1.15"/></svg><div class="a" style="left:138.3px;top:128.2px;width:2.4px;height:2.4px;border-radius:50%;background:#4a4a4a"></div><div class="a" style="left:143.9px;top:128.2px;width:2.4px;height:2.4px;border-radius:50%;background:#4a4a4a"></div><div class="a" style="left:149.5px;top:128.2px;width:2.4px;height:2.4px;border-radius:50%;background:#4a4a4a"></div><div class="btn" style="left:8.5px;top:139.5px;width:69.5px;height:18px;background:#dcdde2"></div><div class="t" style="left:8.5px;width:69.5px;text-align:center;top:143.5px;font-size:13px">Mute</div><div class="btn" style="left:82px;top:139.5px;width:70px;height:18px;background:#dcdde2"></div><div class="t" style="left:82px;width:70px;text-align:center;top:143.5px;font-size:13px">Solo</div><div class="btn" style="left:8.5px;top:162.0px;width:143.5px;height:21.5px;background:#dcdde2"></div><div class="t" style="left:8.5px;width:143.5px;text-align:center;top:166.5px;font-size:13px">Effects</div><div class="a" style="left:14.5px;top:190.0px;width:5px;height:1.2px;background:#444"></div><div class="t" style="left:139.5px;top:185.0px;font-size:11px;font-weight:bold;color:#333">+</div><div class="a" style="left:14.5px;top:200.0px;width:132.5px;height:2px;background:#c9d3de"></div><div class="a" style="left:14.5px;top:196.0px;width:1px;height:4px;background:#bccbd8"></div><div class="a" style="left:24.6px;top:197.5px;width:1px;height:2.5px;background:#bccbd8"></div><div class="a" style="left:34.7px;top:197.5px;width:1px;height:2.5px;background:#bccbd8"></div><div class="a" style="left:44.8px;top:197.5px;width:1px;height:2.5px;background:#bccbd8"></div><div class="a" style="left:55.0px;top:197.5px;width:1px;height:2.5px;background:#bccbd8"></div><div class="a" style="left:65.1px;top:197.5px;width:1px;height:2.5px;background:#bccbd8"></div><div class="a" style="left:75.2px;top:197.5px;width:1px;height:2.5px;background:#bccbd8"></div><div class="a" style="left:85.3px;top:197.5px;width:1px;height:2.5px;background:#bccbd8"></div><div class="a" style="left:95.4px;top:197.5px;width:1px;height:2.5px;background:#bccbd8"></div><div class="a" style="left:105.5px;top:197.5px;width:1px;height:2.5px;background:#bccbd8"></div><div class="a" style="left:115.7px;top:197.5px;width:1px;height:2.5px;background:#bccbd8"></div><div class="a" style="left:125.8px;top:197.5px;width:1px;height:2.5px;background:#bccbd8"></div><div class="a" style="left:135.9px;top:197.5px;width:1px;height:2.5px;background:#bccbd8"></div><div class="a" style="left:146.0px;top:196.0px;width:1px;height:4px;background:#bccbd8"></div><div class="a" style="left:73.7px;top:194.7px;width:12.6px;height:12.6px;border:1.6px solid #383838;border-radius:50%;background:#f7f7f7"></div><div class="t" style="left:14px;top:216.0px;font-size:9.5px;font-weight:bold;color:#333">L</div><div class="t" style="left:137px;top:216.0px;font-size:9.5px;font-weight:bold;color:#333">R</div><div class="a" style="left:14.5px;top:230.0px;width:132.5px;height:2px;background:#c9d3de"></div><div class="a" style="left:14.5px;top:226.0px;width:1px;height:4px;background:#bccbd8"></div><div class="a" style="left:24.6px;top:227.5px;width:1px;height:2.5px;background:#bccbd8"></div><div class="a" style="left:34.7px;top:227.5px;width:1px;height:2.5px;background:#bccbd8"></div><div class="a" style="left:44.8px;top:227.5px;width:1px;height:2.5px;background:#bccbd8"></div><div class="a" style="left:55.0px;top:227.5px;width:1px;height:2.5px;background:#bccbd8"></div><div class="a" style="left:65.1px;top:227.5px;width:1px;height:2.5px;background:#bccbd8"></div><div class="a" style="left:75.2px;top:227.5px;width:1px;height:2.5px;background:#bccbd8"></div><div class="a" style="left:85.3px;top:227.5px;width:1px;height:2.5px;background:#bccbd8"></div><div class="a" style="left:95.4px;top:227.5px;width:1px;height:2.5px;background:#bccbd8"></div><div class="a" style="left:105.5px;top:227.5px;width:1px;height:2.5px;background:#bccbd8"></div><div class="a" style="left:115.7px;top:227.5px;width:1px;height:2.5px;background:#bccbd8"></div><div class="a" style="left:125.8px;top:227.5px;width:1px;height:2.5px;background:#bccbd8"></div><div class="a" style="left:135.9px;top:227.5px;width:1px;height:2.5px;background:#bccbd8"></div><div class="a" style="left:146.0px;top:226.0px;width:1px;height:4px;background:#bccbd8"></div><div class="a" style="left:73.7px;top:224.7px;width:12.6px;height:12.6px;border:1.6px solid #383838;border-radius:50%;background:#f7f7f7"></div><div class="a" style="left:156px;top:116.5px;width:1.5px;height:167.5px;background:#4d4d52"></div><div class="a" style="left:157.5px;top:116.5px;width:31px;height:167.5px;background:#f7f7f7"></div><div class="a" style="left:187.5px;top:116.5px;width:1.2px;height:167.5px;background:#50525e"></div><div class="a" style="left:158px;top:134.3px;width:30px;height:1px;background:#dcdcdc"></div><div class="t" style="left:140px;width:43px;text-align:right;top:137.5px;font-size:12px;font-weight:bold;color:#222">1.0</div><div class="t" style="left:140px;width:43px;text-align:right;top:165.9px;font-size:12px;font-weight:normal;color:#222">0.5</div><div class="a" style="left:184.5px;top:171.4px;width:3.5px;height:1px;background:#222"></div><div class="t" style="left:140px;width:43px;text-align:right;top:203.2px;font-size:12px;font-weight:bold;color:#222">0.0</div><div class="a" style="left:183px;top:208.8px;width:5px;height:1.5px;background:#222"></div><div class="t" style="left:140px;width:43px;text-align:right;top:240.6px;font-size:12px;font-weight:normal;color:#222">-0.5</div><div class="a" style="left:184.5px;top:246.1px;width:3.5px;height:1px;background:#222"></div><div class="t" style="left:140px;width:43px;text-align:right;top:270.0px;font-size:12px;font-weight:bold;color:#222">-1.0</div><div class="a" style="left:182.5px;top:282.5px;width:5.5px;height:1.5px;background:#222"></div><div class="a" style="left:188.5px;top:116.5px;width:1348px;height:18.0px;background:#3c3e50"></div><div class="a" style="left:188.5px;top:134.5px;width:1348px;height:149.5px;background:#454859"></div><div class="a" style="left:254.0px;top:116.5px;width:1px;height:167.5px;background:#5b5d6e"></div><div class="a" style="left:333.0px;top:116.5px;width:1px;height:167.5px;background:#5b5d6e"></div><div class="a" style="left:411.9px;top:116.5px;width:1px;height:167.5px;background:#5b5d6e"></div><div class="a" style="left:490.9px;top:116.5px;width:1px;height:167.5px;background:#5b5d6e"></div><div class="a" style="left:569.8px;top:116.5px;width:1px;height:167.5px;background:#5b5d6e"></div><div class="a" style="left:648.8px;top:116.5px;width:1px;height:167.5px;background:#5b5d6e"></div><div class="a" style="left:727.8px;top:116.5px;width:1px;height:167.5px;background:#5b5d6e"></div><div class="a" style="left:806.7px;top:116.5px;width:1px;height:167.5px;background:#5b5d6e"></div><div class="a" style="left:885.7px;top:116.5px;width:1px;height:167.5px;background:#5b5d6e"></div><div class="a" style="left:964.6px;top:116.5px;width:1px;height:167.5px;background:#5b5d6e"></div><div class="a" style="left:1043.6px;top:116.5px;width:1px;height:167.5px;background:#5b5d6e"></div><div class="a" style="left:1122.6px;top:116.5px;width:1px;height:167.5px;background:#5b5d6e"></div><div class="a" style="left:1201.5px;top:116.5px;width:1px;height:167.5px;background:#5b5d6e"></div><div class="a" style="left:1280.5px;top:116.5px;width:1px;height:167.5px;background:#5b5d6e"></div><div class="a" style="left:1359.4px;top:116.5px;width:1px;height:167.5px;background:#5b5d6e"></div><div class="a" style="left:1438.4px;top:116.5px;width:1px;height:167.5px;background:#5b5d6e"></div><div class="a" style="left:1517.4px;top:116.5px;width:1px;height:167.5px;background:#5b5d6e"></div><div class="a" style="left:188.5px;top:118.5px;width:1071.5px;height:16.0px;background:#cdd4ef;border-radius:0px 4px 0 0"></div><div class="a" style="left:188.5px;top:134.5px;width:1071.5px;height:149.5px;background:#eff2fd"></div><div class="t" style="left:195.0px;top:120.7px;font-size:12.6px;color:#2a2a2a">podcast-sample-ryan</div><div class="a" style="left:1236.0px;top:127.0px;width:3px;height:3px;border-radius:50%;background:#222"></div><div class="a" style="left:1242.2px;top:127.0px;width:3px;height:3px;border-radius:50%;background:#222"></div><div class="a" style="left:1248.4px;top:127.0px;width:3px;height:3px;border-radius:50%;background:#222"></div><div class="a" style="left:1320.5px;top:118.5px;width:214.5px;height:16.0px;background:#cdd4ef;border-radius:4px 0px 0 0"></div><div class="a" style="left:1320.5px;top:134.5px;width:214.5px;height:149.5px;background:#eff2fd"></div><div class="t" style="left:1327.0px;top:120.7px;font-size:12.6px;color:#2a2a2a">podcast-sample-ryan</div><div class="a" style="left:1509.5px;top:127.0px;width:3px;height:3px;border-radius:50%;background:#222"></div><div class="a" style="left:1515.7px;top:127.0px;width:3px;height:3px;border-radius:50%;background:#222"></div><div class="a" style="left:1521.9px;top:127.0px;width:3px;height:3px;border-radius:50%;background:#222"></div><div class="a" style="left:1260px;top:134px;width:1px;height:150px;background:#2a2c3a"></div><div class="a" style="left:1261px;top:134px;width:1px;height:150px;background:#d8dcea"></div><svg class="a" style="left:0;top:0" width="1536" height="790"><path d="M192.5 176.6V183.5M192.5 234.8V245.6M194.5 174.8V187.6M200.5 238.1V240.5M201.5 181.4V184.1M201.5 238.6V253.1M202.5 176.0V185.6M204.5 237.9V245.3M206.5 231.6V233.4M209.5 236.5V240.2M215.5 233.5V244.3M218.5 239.1V246.9M219.5 169.1V181.5M223.5 234.3V241.5M224.5 178.2V183.7M226.5 174.9V179.0M226.5 235.4V244.4M229.5 182.4V183.9M229.5 230.6V240.2M232.5 231.5V239.6M233.5 166.9V179.8M234.5 181.9V183.0M234.5 236.8V245.9M237.5 236.0V239.6M239.5 180.4V184.2M239.5 235.2V246.0M241.5 175.5V182.4M243.5 185.5V188.4M244.5 231.8V235.4M248.5 183.8V187.8M249.5 175.5V183.9M249.5 237.7V239.5M250.5 170.8V182.1M251.5 174.5V188.9M251.5 238.2V240.7M252.5 182.3V186.0M252.5 233.8V235.4M257.5 175.6V182.1M258.5 176.1V179.6M261.5 235.5V241.3M262.5 236.1V241.5M263.5 234.6V236.5M268.5 177.6V179.3M269.5 181.5V188.9M270.5 233.8V236.1M271.5 233.2V236.0M272.5 176.9V189.0M273.5 232.1V237.7M274.5 232.4V234.7M276.5 173.3V179.1M278.5 235.1V247.8M281.5 177.6V182.1M283.5 231.5V243.1M284.5 170.4V180.0M286.5 175.1V180.4M289.5 238.0V244.3M290.5 185.3V188.3M292.5 185.4V186.9M292.5 231.6V236.5M293.5 183.4V185.4M293.5 231.6V236.6M295.5 173.6V182.1M296.5 173.5V179.9M298.5 233.0V244.8M299.5 232.8V239.8M301.5 180.5V183.6M302.5 173.2V184.9M303.5 178.1V180.2M306.5 174.6V186.3M306.5 238.5V240.5M307.5 172.7V184.5M309.5 169.8V182.9M310.5 234.4V245.4M312.5 180.1V186.0M314.5 233.9V234.9M317.5 175.5V185.1M317.5 237.7V240.0M319.5 235.7V248.1M322.5 233.3V238.3M325.5 232.2V239.1M327.5 183.6V186.4M328.5 230.9V236.5M329.5 169.1V182.7M329.5 231.5V239.9M330.5 176.5V182.8M330.5 233.9V246.0M333.5 236.5V244.0M334.5 232.6V236.3M341.5 239.1V241.9M344.5 236.9V238.0M345.5 181.7V184.9M345.5 236.5V239.7M346.5 182.0V185.6M348.5 233.4V242.8M350.5 171.9V181.4M351.5 173.5V179.6M353.5 177.2V183.5M355.5 232.4V238.0M356.5 176.5V188.1M356.5 236.3V244.5M357.5 234.2V243.2M360.5 184.6V188.4M361.5 230.3V237.1M364.5 180.0V188.9M366.5 184.6V190.9M367.5 188.9V192.8M367.5 223.0V224.2M368.5 225.4V227.1M369.5 223.0V228.3M371.5 223.0V224.9M372.5 191.6V197.3M374.5 174.5V182.5M377.5 236.0V246.1M378.5 181.7V187.2M380.5 177.7V187.7M382.5 239.3V248.3M383.5 175.0V179.8M383.5 234.2V237.9M387.5 167.5V180.8M387.5 230.7V233.2M388.5 230.2V239.8M391.5 171.0V183.5M393.5 176.6V181.9M393.5 238.6V240.9M395.5 236.9V243.8M397.5 176.7V186.9M399.5 239.5V254.4M400.5 170.8V184.8M403.5 170.0V183.6M404.5 236.7V239.1M405.5 180.2V183.2M405.5 233.0V246.4M407.5 164.8V179.4M407.5 235.4V244.7M408.5 233.8V235.6M410.5 235.5V248.0M416.5 168.0V182.6M420.5 183.5V188.0M420.5 232.5V246.1M422.5 233.0V245.8M423.5 173.7V185.7M424.5 177.1V186.7M424.5 234.4V238.1M425.5 168.2V180.4M425.5 239.3V248.3M426.5 183.2V184.6M428.5 231.1V232.7M430.5 186.4V188.3M431.5 177.7V179.7M431.5 236.2V242.1M432.5 186.4V188.6M432.5 230.2V244.5M435.5 238.6V241.3M440.5 169.1V180.5M442.5 178.5V183.0M442.5 236.6V246.1M444.5 177.3V182.3M447.5 180.3V184.1M447.5 238.1V248.8M450.5 235.1V244.0M451.5 176.1V183.4M453.5 174.4V187.5M453.5 235.6V237.8M455.5 233.3V237.4M457.5 180.1V184.5M460.5 232.1V236.0M464.5 173.1V183.7M465.5 165.0V179.3M466.5 184.3V186.7M466.5 230.6V245.3M467.5 233.7V238.5M470.5 165.8V180.1M474.5 180.5V182.7M475.5 183.6V185.8M477.5 180.8V186.2M477.5 237.3V243.5M478.5 179.0V184.4M481.5 175.4V188.1M482.5 166.8V181.4M485.5 238.7V240.2M486.5 230.6V239.9M487.5 231.7V236.5M488.5 170.9V184.5M492.5 181.5V186.1M495.5 231.1V232.4M496.5 233.4V234.6M501.5 180.4V187.6M502.5 168.3V179.0M502.5 235.7V245.6M505.5 232.5V235.9M507.5 234.6V235.9M508.5 180.5V186.9M510.5 235.7V239.2M512.5 233.9V243.7M513.5 235.3V242.2M514.5 235.3V238.0M516.5 232.1V239.7M519.5 179.0V186.7M521.5 169.5V182.6M521.5 238.1V251.3M522.5 178.3V188.1M522.5 240.0V248.6M524.5 185.0V188.2M526.5 237.5V247.7M527.5 234.4V243.9M528.5 230.6V231.7M530.5 237.0V240.4M531.5 237.8V243.5M532.5 174.0V181.0M533.5 177.2V185.7M533.5 232.5V239.7M535.5 179.9V189.0M535.5 237.8V239.8M543.5 179.1V185.2M545.5 185.7V190.9M545.5 229.9V236.4M546.5 179.8V188.6M548.5 182.3V183.7M550.5 181.1V191.6M551.5 184.9V191.9M551.5 227.5V239.2M555.5 183.2V193.4M557.5 183.0V192.5M557.5 226.0V234.5M559.5 184.3V192.7M563.5 191.1V192.9M565.5 224.1V230.2M566.5 191.0V196.6M566.5 226.0V229.3M567.5 191.7V197.0M570.5 224.2V227.9M571.5 220.5V227.5M572.5 196.2V198.0M573.5 221.0V224.1M578.5 175.8V179.7M581.5 178.7V181.1M582.5 169.9V184.4M582.5 234.4V247.3M584.5 230.8V237.6M585.5 178.0V183.8M587.5 187.6V189.1M588.5 167.8V181.8M590.5 232.2V246.8M594.5 183.3V187.6M597.5 232.2V237.2M601.5 177.4V185.0M603.5 231.6V242.8M604.5 231.4V235.5M607.5 174.8V180.6M608.5 235.8V237.4M609.5 169.6V180.5M610.5 175.5V188.1M613.5 176.7V183.0M614.5 180.7V181.9M615.5 234.4V242.0M617.5 183.5V188.4M619.5 171.8V180.2M620.5 184.6V186.4M620.5 237.7V247.9M621.5 237.5V246.8M623.5 178.7V185.6M624.5 178.0V180.4M625.5 234.6V243.0M626.5 182.4V187.1M626.5 229.0V234.8M628.5 189.1V194.3M629.5 189.5V192.2M629.5 226.9V230.1M630.5 225.1V232.1M631.5 222.2V229.2M632.5 188.5V196.0M634.5 195.9V196.9M636.5 191.9V197.1M638.5 226.5V228.2M639.5 227.1V228.9M640.5 226.8V235.2M641.5 194.3V196.5M641.5 226.8V229.0M647.5 190.1V193.6M650.5 224.9V226.8M651.5 190.4V196.2M653.5 194.7V196.2M654.5 225.3V228.5M655.5 184.7V193.1M662.5 190.8V195.8M665.5 226.7V235.3M666.5 188.7V192.9M666.5 225.0V228.2M668.5 222.4V230.8M675.5 225.3V229.7M683.5 191.9V197.2M684.5 183.7V192.3M686.5 187.4V193.4M686.5 225.3V226.5M687.5 189.8V194.0M688.5 184.1V191.3M690.5 227.7V230.0M692.5 187.6V193.1M693.5 182.8V186.9M696.5 170.4V180.2M697.5 180.2V183.1M698.5 185.5V188.8M700.5 173.3V183.9M701.5 235.7V243.6M702.5 176.8V186.5M702.5 234.4V239.6M706.5 186.3V188.9M711.5 239.8V254.5M712.5 173.0V186.2M713.5 181.1V185.0M715.5 171.2V179.3M715.5 232.4V246.2M717.5 168.1V181.1M717.5 231.8V238.0M718.5 171.3V181.5M718.5 237.8V244.3M720.5 176.2V180.8M721.5 170.0V180.5M721.5 236.0V242.7M728.5 168.0V182.5M728.5 234.9V238.5M729.5 231.6V241.4M730.5 174.4V182.3M731.5 183.3V188.7M732.5 170.2V179.4M733.5 232.4V243.0M734.5 180.5V183.2M734.5 232.0V236.9M735.5 173.7V184.8M735.5 232.2V235.1M742.5 177.8V181.9M742.5 239.2V247.8M743.5 175.3V186.8M746.5 179.1V182.6M746.5 231.3V234.6M747.5 238.2V248.7M749.5 167.3V181.5M749.5 233.0V244.0M752.5 234.6V238.4M756.5 175.1V179.0M757.5 180.9V183.9M760.5 187.0V188.9M764.5 180.6V183.5M764.5 236.6V240.4M765.5 177.8V185.6M765.5 238.9V246.5M766.5 174.0V182.0M766.5 235.9V241.0M767.5 183.8V189.3M768.5 225.0V230.9M770.5 192.6V196.4M770.5 221.7V226.0M771.5 221.8V228.6M773.5 192.7V196.7M774.5 194.9V199.1M775.5 188.9V194.6M775.5 220.3V221.3M778.5 221.1V228.0M779.5 221.7V224.3M780.5 196.1V198.6M780.5 224.7V225.8M781.5 221.6V225.6M784.5 220.7V222.5M788.5 224.7V227.2M792.5 223.2V224.4M794.5 189.8V194.7M795.5 224.0V228.4M797.5 185.9V190.7M797.5 225.7V233.1M802.5 185.7V191.7M805.5 182.1V191.2M805.5 226.1V227.9M808.5 187.7V195.2M809.5 185.6V191.0M809.5 227.3V228.9M811.5 191.2V195.4M815.5 226.8V234.5M816.5 227.3V233.6M818.5 230.1V238.9M819.5 183.8V192.0M819.5 224.3V227.6M820.5 184.3V193.0M825.5 188.3V193.7M827.5 184.0V189.8M828.5 192.4V194.3M830.5 181.7V188.7M830.5 230.4V234.5M831.5 177.2V185.3M831.5 233.5V244.6M835.5 238.2V249.6M836.5 236.4V239.0M839.5 182.0V188.2M841.5 182.7V184.8M843.5 183.5V187.2M846.5 237.3V242.2M847.5 232.2V233.3M850.5 182.7V185.0M854.5 170.0V179.7M856.5 183.2V185.2M857.5 238.9V246.9M858.5 175.7V183.8M858.5 235.3V236.6M865.5 180.9V188.0M865.5 233.6V236.3M866.5 169.3V182.3M872.5 188.9V190.6M875.5 191.0V195.8M875.5 225.8V227.4M876.5 187.5V191.2M878.5 228.0V234.4M881.5 231.9V241.0M883.5 175.2V179.6M883.5 237.4V250.2M885.5 237.2V251.9M886.5 181.4V182.4M886.5 239.2V245.6M888.5 182.1V184.0M889.5 234.5V235.6M891.5 169.9V183.7M891.5 238.3V243.5M896.5 178.9V180.3M899.5 184.9V186.4M900.5 182.3V184.5M900.5 239.7V249.4M901.5 236.2V238.5M903.5 179.8V186.2M905.5 178.5V183.8M906.5 184.1V186.7M907.5 231.6V240.1M909.5 238.6V244.0M912.5 237.4V239.2M913.5 168.7V181.0M913.5 232.5V239.9M915.5 230.7V232.9M917.5 182.4V185.2M918.5 231.6V240.5M920.5 232.7V234.7M923.5 234.3V238.2M925.5 230.1V236.7M926.5 231.6V232.7M927.5 171.4V183.8M927.5 238.7V242.4M930.5 230.1V234.2M931.5 176.2V179.1M932.5 177.4V183.0M934.5 180.7V184.8M936.5 184.7V186.9M937.5 176.6V184.6M938.5 176.1V185.3M940.5 169.6V180.4M940.5 234.7V240.5M942.5 239.4V241.6M944.5 175.5V184.3M944.5 233.2V238.3M947.5 237.8V248.5M948.5 230.0V239.1M950.5 178.6V186.7M950.5 234.2V240.5M952.5 165.4V180.4M952.5 234.8V246.0M954.5 165.6V180.4M954.5 234.7V237.2M956.5 179.0V180.7M959.5 177.9V182.9M961.5 237.8V245.4M963.5 167.4V180.8M964.5 178.6V181.0M967.5 180.6V188.1M967.5 237.8V242.3M968.5 175.0V189.0M973.5 236.0V245.5M976.5 232.8V240.1M977.5 234.8V243.1M978.5 233.7V244.0M979.5 175.9V184.1M981.5 177.0V182.3M983.5 238.9V243.2M985.5 236.4V238.7M986.5 175.9V187.5M986.5 239.4V244.7M987.5 178.8V182.3M988.5 233.6V244.9M989.5 171.4V181.4M990.5 178.2V182.3M990.5 235.5V243.1M991.5 187.1V188.4M991.5 231.0V241.2M998.5 178.5V187.4M1001.5 239.0V241.1M1002.5 180.2V184.0M1006.5 171.5V181.1M1010.5 180.4V187.1M1011.5 171.2V182.7M1011.5 234.8V245.8M1013.5 234.4V240.9M1016.5 175.7V187.0M1016.5 234.6V241.0M1019.5 175.7V179.5M1021.5 184.4V186.0M1023.5 174.8V182.6M1028.5 237.6V245.6M1030.5 232.8V242.2M1032.5 230.8V235.8M1033.5 237.6V247.2M1035.5 232.0V233.3M1036.5 183.9V187.0M1037.5 177.5V179.1M1041.5 180.2V183.3M1042.5 233.6V237.2M1045.5 238.8V243.4M1048.5 180.8V185.3M1049.5 174.6V184.6M1049.5 230.6V237.2M1050.5 235.0V237.1M1053.5 233.1V235.0M1056.5 183.8V185.3M1057.5 175.6V185.5M1059.5 174.8V180.1M1059.5 234.7V238.2M1063.5 173.6V182.3M1063.5 239.8V244.6M1064.5 232.2V234.7M1067.5 176.3V188.3M1073.5 237.0V239.3M1075.5 236.5V242.7M1077.5 179.9V186.1M1078.5 173.1V182.3M1082.5 239.0V242.5M1085.5 187.2V188.9M1087.5 239.0V251.5M1091.5 232.6V240.7M1092.5 231.2V236.3M1094.5 231.6V243.0M1095.5 173.8V182.3M1096.5 236.5V247.8M1097.5 237.5V239.3M1103.5 179.1V184.2M1106.5 176.9V179.6M1106.5 239.3V250.1M1107.5 177.7V179.5M1108.5 230.4V239.3M1109.5 231.2V233.6M1113.5 173.7V181.3M1113.5 237.7V245.0M1114.5 231.2V234.5M1116.5 232.8V246.6M1119.5 235.3V239.3M1120.5 233.1V237.3M1121.5 169.8V181.3M1124.5 235.3V244.8M1125.5 173.3V182.7M1126.5 177.2V180.2M1127.5 177.8V183.9M1128.5 230.0V235.9M1134.5 173.4V184.4M1135.5 179.2V186.3M1137.5 237.9V246.1M1141.5 231.4V244.5M1142.5 179.0V186.0M1142.5 236.3V243.9M1143.5 237.1V248.6M1144.5 230.8V231.8M1148.5 230.6V232.1M1151.5 173.4V186.4M1151.5 239.9V241.8M1152.5 182.4V189.1M1152.5 237.3V243.8M1153.5 175.2V184.3M1156.5 181.3V188.7M1157.5 235.0V246.8M1158.5 175.8V179.1M1158.5 234.8V238.6M1161.5 230.1V232.8M1162.5 183.0V184.4M1162.5 237.8V241.4M1163.5 177.9V179.3M1163.5 239.7V246.5M1165.5 176.9V183.6M1165.5 232.3V235.4M1167.5 231.7V244.9M1173.5 239.7V250.9M1174.5 175.5V188.7M1177.5 230.9V241.9M1182.5 233.9V236.4M1184.5 177.8V185.1M1185.5 233.5V239.6M1186.5 231.1V234.6M1187.5 178.5V185.0M1188.5 167.5V181.3M1189.5 233.9V235.5M1191.5 235.0V239.1M1195.5 169.8V179.1M1199.5 237.5V244.2M1201.5 234.4V246.8M1202.5 173.7V185.3M1203.5 233.2V243.3M1204.5 172.9V186.6M1210.5 183.3V184.7M1211.5 230.8V238.9M1218.5 174.6V188.3M1218.5 238.5V248.7M1221.5 180.8V182.7M1222.5 237.7V241.1M1224.5 171.6V180.8M1225.5 231.0V237.4M1227.5 234.0V246.3M1230.5 180.1V187.1M1231.5 236.2V238.7M1232.5 177.6V184.5M1232.5 227.5V228.8M1233.5 184.7V186.8M1233.5 232.9V234.5M1234.5 180.8V191.5M1234.5 233.1V235.4M1235.5 231.1V233.5M1236.5 231.6V239.5M1239.5 189.8V191.8M1239.5 226.3V229.3M1240.5 184.4V190.5M1240.5 230.7V232.0M1242.5 186.6V190.0M1243.5 227.8V231.4M1245.5 190.9V194.5M1246.5 186.1V193.7M1247.5 223.2V230.1M1251.5 187.8V194.0M1251.5 225.7V229.0M1254.5 196.2V198.6M1254.5 224.2V226.9" stroke="#8f90e0" stroke-width="1" fill="none" shape-rendering="crispEdges"/><path d="M188.5 187.8V235.0M189.5 188.4V231.2M190.5 183.9V236.7M191.5 183.9V238.2M192.5 183.5V234.8M193.5 187.8V234.7M194.5 187.6V236.8M195.5 185.6V234.7M196.5 188.9V231.5M197.5 188.5V230.2M198.5 185.9V230.8M199.5 187.8V237.4M200.5 188.8V238.1M201.5 184.1V238.6M202.5 185.6V234.3M203.5 186.6V238.5M204.5 182.0V237.9M205.5 209.0V237.9M206.5 185.4V231.6M207.5 188.5V210.0M208.5 182.9V232.3M209.5 185.8V236.5M210.5 187.9V230.8M211.5 182.0V230.6M212.5 184.4V230.4M213.5 181.3V232.6M214.5 184.0V232.8M215.5 182.7V233.5M216.5 183.5V210.0M217.5 185.8V235.5M218.5 182.6V239.1M219.5 181.5V233.8M220.5 183.4V210.0M221.5 183.4V238.2M222.5 180.1V231.0M223.5 184.5V234.3M224.5 183.7V235.0M225.5 209.0V230.6M226.5 179.0V235.4M227.5 186.2V232.5M228.5 185.0V237.4M229.5 183.9V230.6M230.5 188.8V230.4M231.5 185.4V239.0M232.5 185.4V231.5M233.5 179.8V234.5M234.5 183.0V236.8M235.5 182.0V235.0M236.5 184.1V231.5M237.5 187.4V236.0M238.5 183.8V239.1M239.5 184.2V235.2M240.5 188.8V234.7M241.5 182.4V231.6M242.5 184.9V237.9M243.5 188.4V231.2M244.5 185.4V231.8M245.5 185.1V230.4M246.5 179.3V233.5M247.5 180.0V237.5M248.5 187.8V230.1M249.5 183.9V237.7M250.5 182.1V234.0M251.5 188.9V238.2M252.5 186.0V233.8M253.5 186.2V232.7M254.5 185.3V237.2M255.5 187.3V237.6M256.5 184.8V231.3M257.5 182.1V233.8M258.5 179.6V238.5M259.5 180.9V230.8M260.5 180.1V231.5M261.5 180.6V235.5M262.5 182.5V236.1M263.5 180.0V234.6M264.5 185.9V238.8M265.5 179.5V237.8M266.5 184.5V236.4M267.5 179.9V232.6M268.5 179.3V231.5M269.5 188.9V239.4M270.5 180.9V233.8M271.5 186.0V233.2M272.5 189.0V230.0M273.5 179.3V232.1M274.5 181.0V232.4M275.5 179.9V235.8M276.5 179.1V234.5M277.5 182.3V230.3M278.5 179.2V235.1M279.5 180.2V233.2M280.5 182.8V239.8M281.5 182.1V233.1M282.5 182.8V232.7M283.5 209.0V231.5M284.5 180.0V232.3M285.5 181.4V239.2M286.5 180.4V233.9M287.5 183.0V237.5M288.5 182.6V237.4M289.5 187.0V238.0M290.5 188.3V232.6M291.5 184.6V236.1M292.5 186.9V231.6M293.5 185.4V231.6M294.5 181.8V232.0M295.5 182.1V230.8M296.5 179.9V231.1M297.5 179.1V235.9M298.5 183.0V233.0M299.5 181.4V232.8M300.5 209.0V210.0M301.5 183.6V235.4M302.5 184.9V231.0M303.5 180.2V238.8M304.5 179.4V233.6M305.5 180.3V233.3M306.5 186.3V238.5M307.5 184.5V233.5M308.5 185.1V238.1M309.5 182.9V234.3M310.5 186.8V234.4M311.5 209.0V233.7M312.5 186.0V237.7M313.5 187.9V239.2M314.5 183.2V233.9M315.5 182.6V210.0M316.5 209.0V210.0M317.5 185.1V237.7M318.5 188.3V210.0M319.5 180.9V235.7M320.5 183.5V235.4M321.5 186.7V236.7M322.5 183.5V233.3M323.5 186.9V210.0M324.5 209.0V230.7M325.5 179.4V232.2M326.5 185.9V234.7M327.5 186.4V230.8M328.5 185.9V230.9M329.5 182.7V231.5M330.5 182.8V233.9M331.5 209.0V235.4M332.5 186.1V234.1M333.5 189.0V236.5M334.5 186.0V232.6M335.5 184.2V232.5M336.5 182.2V239.1M337.5 187.6V237.4M338.5 209.0V232.1M339.5 185.8V240.1M340.5 189.0V232.4M341.5 209.0V239.1M342.5 209.0V210.0M343.5 187.0V232.6M344.5 181.5V236.9M345.5 184.9V236.5M346.5 185.6V236.9M347.5 209.0V237.0M348.5 184.1V233.4M349.5 179.5V230.1M350.5 181.4V231.8M351.5 179.6V238.5M352.5 179.8V238.9M353.5 183.5V235.8M354.5 182.2V210.0M355.5 181.7V232.4M356.5 188.1V236.3M357.5 182.9V234.2M358.5 184.8V235.1M359.5 184.4V230.6M360.5 188.4V233.0M361.5 190.3V230.3M362.5 191.1V226.8M363.5 191.2V228.8M364.5 188.9V224.6M365.5 194.0V225.1M366.5 190.9V224.8M367.5 192.8V223.0M368.5 196.8V225.4M369.5 194.4V223.0M370.5 209.0V220.5M371.5 197.9V223.0M372.5 197.3V218.3M373.5 195.2V225.8M374.5 182.5V236.2M375.5 184.8V232.3M376.5 181.3V238.6M377.5 209.0V236.0M378.5 187.2V239.5M379.5 184.1V237.1M380.5 187.7V232.8M381.5 188.4V233.2M382.5 182.6V239.3M383.5 179.8V234.2M384.5 182.5V236.8M385.5 180.4V236.5M386.5 178.9V237.2M387.5 180.8V230.7M388.5 182.6V230.2M389.5 182.1V234.2M390.5 186.5V210.0M391.5 183.5V235.9M392.5 209.0V210.0M393.5 181.9V238.6M394.5 179.1V232.7M395.5 187.5V236.9M396.5 181.3V232.8M397.5 186.9V238.4M398.5 181.8V233.4M399.5 182.0V239.5M400.5 184.8V237.0M401.5 186.1V238.2M402.5 188.2V210.0M403.5 183.6V232.4M404.5 181.5V236.7M405.5 183.2V233.0M406.5 209.0V235.4M407.5 179.4V235.4M408.5 186.5V233.8M409.5 184.7V210.0M410.5 182.7V235.5M411.5 209.0V210.0M412.5 181.0V234.2M413.5 186.5V234.0M414.5 183.4V237.8M415.5 209.0V210.0M416.5 182.6V234.6M417.5 180.6V234.5M418.5 184.6V231.4M419.5 181.4V210.0M420.5 188.0V232.5M421.5 185.2V239.1M422.5 181.6V233.0M423.5 185.7V234.7M424.5 186.7V234.4M425.5 180.4V239.3M426.5 184.6V236.1M427.5 178.9V233.2M428.5 181.7V231.1M429.5 209.0V234.5M430.5 188.3V235.9M431.5 179.7V236.2M432.5 188.6V230.2M433.5 179.5V235.8M434.5 182.4V232.9M435.5 187.3V238.6M436.5 180.0V234.7M437.5 179.8V235.7M438.5 188.5V234.7M439.5 187.0V238.7M440.5 180.5V233.0M441.5 187.8V232.0M442.5 183.0V236.6M443.5 181.8V210.0M444.5 182.3V233.7M445.5 188.0V210.0M446.5 188.2V237.0M447.5 184.1V238.1M448.5 185.2V236.6M449.5 182.9V233.9M450.5 180.7V235.1M451.5 183.4V229.9M452.5 186.5V236.6M453.5 187.5V235.6M454.5 188.0V238.9M455.5 179.5V233.3M456.5 182.3V235.5M457.5 184.5V235.1M458.5 209.0V210.0M459.5 186.0V239.2M460.5 188.9V232.1M461.5 209.0V239.8M462.5 182.7V238.3M463.5 180.8V230.5M464.5 183.7V235.4M465.5 179.3V237.1M466.5 186.7V230.6M467.5 187.1V233.7M468.5 179.8V234.3M469.5 183.3V210.0M470.5 180.1V233.6M471.5 180.6V237.1M472.5 187.3V237.2M473.5 179.0V238.0M474.5 182.7V230.6M475.5 185.8V238.3M476.5 185.8V234.1M477.5 186.2V237.3M478.5 184.4V230.0M479.5 180.9V235.2M480.5 179.0V233.4M481.5 188.1V239.1M482.5 181.4V232.8M483.5 184.7V240.0M484.5 188.6V238.0M485.5 188.7V238.7M486.5 180.8V230.6M487.5 183.8V231.7M488.5 184.5V232.1M489.5 180.1V236.9M490.5 189.0V234.3M491.5 188.4V238.6M492.5 186.1V233.3M493.5 187.3V234.5M494.5 182.7V236.8M495.5 183.3V231.1M496.5 180.7V233.4M497.5 184.8V239.5M498.5 184.1V230.1M499.5 182.5V233.2M500.5 187.3V232.8M501.5 187.6V230.6M502.5 179.0V235.7M503.5 181.2V230.9M504.5 180.5V231.6M505.5 184.9V232.5M506.5 181.1V234.2M507.5 179.3V234.6M508.5 186.9V210.0M509.5 186.6V235.0M510.5 179.9V235.7M511.5 209.0V210.0M512.5 188.3V233.9M513.5 186.2V235.3M514.5 179.2V235.3M515.5 182.3V237.2M516.5 209.0V232.1M517.5 187.2V236.7M518.5 186.5V240.0M519.5 186.7V239.8M520.5 186.9V237.9M521.5 182.6V238.1M522.5 188.1V240.0M523.5 187.9V233.2M524.5 188.2V231.2M525.5 188.1V233.5M526.5 182.2V237.5M527.5 181.7V234.4M528.5 182.0V230.6M529.5 209.0V210.0M530.5 183.3V237.0M531.5 179.2V237.8M532.5 181.0V232.5M533.5 185.7V232.5M534.5 209.0V230.3M535.5 189.0V237.8M536.5 187.1V234.1M537.5 182.5V210.0M538.5 188.1V237.5M539.5 187.4V237.5M540.5 184.2V236.3M541.5 209.0V210.0M542.5 183.9V232.2M543.5 185.2V237.8M544.5 184.2V230.3M545.5 190.9V229.9M546.5 188.6V228.0M547.5 190.4V234.4M548.5 183.7V228.9M549.5 187.9V229.9M550.5 191.6V232.9M551.5 191.9V227.5M552.5 209.0V210.0M553.5 192.6V230.7M554.5 188.3V229.9M555.5 193.4V226.8M556.5 188.4V226.9M557.5 192.5V226.0M558.5 195.1V210.0M559.5 192.7V229.5M560.5 190.2V228.9M561.5 209.0V228.2M562.5 191.6V225.0M563.5 192.9V223.8M564.5 197.5V225.1M565.5 195.1V224.1M566.5 196.6V226.0M567.5 197.0V222.3M568.5 195.7V221.4M569.5 197.0V223.6M570.5 194.7V224.2M571.5 196.5V220.5M572.5 198.0V222.0M573.5 196.4V221.0M574.5 200.5V221.6M575.5 198.3V219.4M576.5 188.2V228.8M577.5 188.7V230.7M578.5 179.7V232.9M579.5 183.6V233.8M580.5 209.0V210.0M581.5 181.1V210.0M582.5 184.4V234.4M583.5 181.8V237.5M584.5 187.7V230.8M585.5 183.8V231.6M586.5 181.4V234.6M587.5 189.1V210.0M588.5 181.8V233.9M589.5 187.8V234.9M590.5 187.9V232.2M591.5 209.0V210.0M592.5 186.6V230.7M593.5 186.1V239.7M594.5 187.6V230.6M595.5 186.4V239.1M596.5 182.3V232.4M597.5 183.2V232.2M598.5 180.0V236.1M599.5 180.3V236.1M600.5 185.8V234.2M601.5 185.0V234.9M602.5 182.6V231.3M603.5 186.2V231.6M604.5 187.7V231.4M605.5 209.0V210.0M606.5 179.0V233.7M607.5 180.6V235.4M608.5 182.6V235.8M609.5 180.5V234.7M610.5 188.1V237.9M611.5 181.7V210.0M612.5 186.8V230.4M613.5 183.0V239.1M614.5 181.9V230.7M615.5 209.0V234.4M616.5 184.1V230.1M617.5 188.4V237.9M618.5 185.2V230.5M619.5 180.2V230.8M620.5 186.4V237.7M621.5 188.5V237.5M622.5 185.3V235.8M623.5 185.6V230.8M624.5 180.4V237.2M625.5 187.1V234.6M626.5 187.1V229.0M627.5 191.7V233.4M628.5 194.3V229.2M629.5 192.2V226.9M630.5 196.4V225.1M631.5 192.4V222.2M632.5 196.0V224.0M633.5 193.6V223.4M634.5 196.9V225.0M635.5 209.0V210.0M636.5 197.1V223.8M637.5 191.5V226.1M638.5 193.1V226.5M639.5 195.3V227.1M640.5 197.2V226.8M641.5 196.5V226.8M642.5 194.9V225.2M643.5 192.0V222.4M644.5 194.9V227.4M645.5 194.7V226.0M646.5 196.9V222.7M647.5 193.6V222.8M648.5 193.3V223.3M649.5 193.3V227.8M650.5 195.2V224.9M651.5 196.2V222.8M652.5 196.9V227.5M653.5 196.2V224.1M654.5 196.6V225.3M655.5 193.1V223.7M656.5 209.0V210.0M657.5 191.2V225.9M658.5 191.7V224.0M659.5 195.6V224.7M660.5 194.5V227.1M661.5 196.6V210.0M662.5 195.8V224.4M663.5 196.3V222.2M664.5 191.9V222.5M665.5 195.5V226.7M666.5 192.9V225.0M667.5 193.4V226.4M668.5 195.0V222.4M669.5 195.7V221.9M670.5 192.5V222.3M671.5 196.4V226.6M672.5 195.7V225.1M673.5 193.5V225.7M674.5 195.8V223.5M675.5 193.3V225.3M676.5 191.4V224.3M677.5 195.8V210.0M678.5 209.0V210.0M679.5 196.1V226.0M680.5 192.7V224.7M681.5 193.6V225.3M682.5 209.0V222.1M683.5 197.2V222.8M684.5 192.3V222.8M685.5 193.9V225.1M686.5 193.4V225.3M687.5 194.0V226.7M688.5 191.3V225.7M689.5 196.5V227.6M690.5 190.5V227.7M691.5 194.3V225.1M692.5 193.1V210.0M693.5 186.9V233.4M694.5 188.9V227.5M695.5 181.7V210.0M696.5 180.2V239.1M697.5 183.1V231.1M698.5 188.8V232.8M699.5 179.4V239.5M700.5 183.9V230.3M701.5 187.1V235.7M702.5 186.5V234.4M703.5 209.0V235.5M704.5 179.8V236.2M705.5 180.1V230.1M706.5 188.9V233.7M707.5 209.0V210.0M708.5 209.0V210.0M709.5 182.7V232.2M710.5 180.6V234.9M711.5 209.0V239.8M712.5 186.2V233.9M713.5 185.0V231.9M714.5 209.0V238.7M715.5 179.3V232.4M716.5 180.1V236.5M717.5 181.1V231.8M718.5 181.5V237.8M719.5 180.5V234.2M720.5 180.8V238.9M721.5 180.5V236.0M722.5 185.0V234.5M723.5 187.4V233.6M724.5 186.2V239.7M725.5 183.9V232.6M726.5 186.1V231.9M727.5 181.2V232.8M728.5 182.5V234.9M729.5 182.1V231.6M730.5 182.3V235.7M731.5 188.7V232.6M732.5 179.4V233.7M733.5 184.3V232.4M734.5 183.2V232.0M735.5 184.8V232.2M736.5 186.6V239.4M737.5 183.3V233.2M738.5 180.7V238.1M739.5 185.2V231.3M740.5 180.7V237.1M741.5 185.2V234.9M742.5 181.9V239.2M743.5 186.8V210.0M744.5 188.9V210.0M745.5 184.9V235.3M746.5 182.6V231.3M747.5 179.8V238.2M748.5 180.2V230.4M749.5 181.5V233.0M750.5 185.6V234.1M751.5 182.2V233.3M752.5 185.0V234.6M753.5 188.0V230.4M754.5 186.0V210.0M755.5 187.3V231.6M756.5 179.0V239.3M757.5 183.9V231.5M758.5 184.5V233.8M759.5 183.8V234.9M760.5 188.9V231.6M761.5 187.0V230.4M762.5 179.5V237.5M763.5 187.7V238.8M764.5 183.5V236.6M765.5 185.6V238.9M766.5 182.0V235.9M767.5 189.3V231.5M768.5 193.2V225.0M769.5 194.0V225.3M770.5 196.4V221.7M771.5 198.9V221.8M772.5 198.8V223.4M773.5 196.7V222.9M774.5 199.1V224.7M775.5 194.6V220.3M776.5 197.2V223.5M777.5 194.7V219.8M778.5 196.1V221.1M779.5 195.1V221.7M780.5 198.6V224.7M781.5 195.8V221.6M782.5 199.2V221.2M783.5 196.2V210.0M784.5 198.5V220.7M785.5 194.4V220.2M786.5 209.0V223.7M787.5 194.9V224.1M788.5 195.9V224.7M789.5 196.1V224.5M790.5 209.0V210.0M791.5 209.0V210.0M792.5 199.1V223.2M793.5 196.0V224.1M794.5 194.7V223.5M795.5 193.2V224.0M796.5 192.8V228.8M797.5 190.7V225.7M798.5 191.2V225.7M799.5 190.6V227.2M800.5 194.0V224.8M801.5 192.3V225.1M802.5 191.7V223.5M803.5 192.4V224.6M804.5 195.0V228.1M805.5 191.2V226.1M806.5 191.5V210.0M807.5 192.9V228.3M808.5 195.2V226.3M809.5 191.0V227.3M810.5 209.0V210.0M811.5 195.4V224.6M812.5 195.0V210.0M813.5 195.0V223.4M814.5 194.9V228.0M815.5 193.2V226.8M816.5 192.4V227.3M817.5 190.9V228.7M818.5 189.2V230.1M819.5 192.0V224.3M820.5 193.0V226.3M821.5 194.2V228.9M822.5 209.0V210.0M823.5 209.0V210.0M824.5 191.5V223.4M825.5 193.7V210.0M826.5 188.7V224.6M827.5 189.8V227.3M828.5 194.3V229.9M829.5 209.0V210.0M830.5 188.7V230.4M831.5 185.3V233.5M832.5 181.2V236.1M833.5 184.8V235.6M834.5 181.4V210.0M835.5 179.6V238.2M836.5 209.0V236.4M837.5 185.3V236.1M838.5 188.1V233.5M839.5 188.2V231.2M840.5 178.9V234.4M841.5 184.8V239.4M842.5 180.5V238.3M843.5 187.2V233.3M844.5 181.8V232.5M845.5 209.0V236.8M846.5 183.5V237.3M847.5 179.9V232.2M848.5 209.0V210.0M849.5 183.5V234.0M850.5 185.0V232.8M851.5 181.2V230.3M852.5 185.2V232.6M853.5 188.0V240.1M854.5 179.7V237.8M855.5 180.2V230.0M856.5 185.2V231.0M857.5 209.0V238.9M858.5 183.8V235.3M859.5 185.0V237.3M860.5 188.9V229.9M861.5 182.0V239.3M862.5 182.7V231.8M863.5 186.4V235.2M864.5 179.3V231.0M865.5 188.0V233.6M866.5 182.3V210.0M867.5 209.0V210.0M868.5 189.4V238.1M869.5 185.9V232.6M870.5 186.2V228.9M871.5 191.8V210.0M872.5 190.6V224.6M873.5 193.3V228.6M874.5 193.2V224.3M875.5 195.8V225.8M876.5 191.2V228.7M877.5 194.2V226.3M878.5 191.6V228.0M879.5 193.8V224.6M880.5 193.5V227.3M881.5 188.1V231.9M882.5 180.1V232.7M883.5 179.6V237.4M884.5 180.1V232.7M885.5 186.4V237.2M886.5 182.4V239.2M887.5 180.5V232.4M888.5 184.0V234.7M889.5 183.7V234.5M890.5 183.1V236.2M891.5 183.7V238.3M892.5 187.7V236.5M893.5 209.0V210.0M894.5 182.3V230.9M895.5 184.2V236.5M896.5 180.3V238.4M897.5 179.2V230.5M898.5 187.7V233.2M899.5 186.4V238.1M900.5 184.5V239.7M901.5 209.0V236.2M902.5 182.0V232.5M903.5 186.2V232.5M904.5 179.3V235.8M905.5 183.8V236.1M906.5 186.7V210.0M907.5 179.0V231.6M908.5 184.7V234.7M909.5 186.8V238.6M910.5 181.2V239.1M911.5 179.8V236.0M912.5 180.9V237.4M913.5 181.0V232.5M914.5 184.8V239.2M915.5 183.4V230.7M916.5 182.1V239.3M917.5 185.2V237.3M918.5 179.6V231.6M919.5 184.6V230.1M920.5 179.1V232.7M921.5 180.1V232.8M922.5 185.1V237.1M923.5 186.0V234.3M924.5 185.8V235.0M925.5 209.0V230.1M926.5 180.5V231.6M927.5 183.8V238.7M928.5 183.9V232.5M929.5 187.9V235.2M930.5 181.6V230.1M931.5 179.1V236.9M932.5 183.0V239.6M933.5 188.0V234.0M934.5 184.8V235.0M935.5 183.8V235.3M936.5 186.9V235.7M937.5 184.6V237.2M938.5 185.3V236.4M939.5 185.2V236.1M940.5 180.4V234.7M941.5 180.9V235.3M942.5 186.2V239.4M943.5 183.9V238.5M944.5 184.3V233.2M945.5 189.0V234.1M946.5 186.5V236.2M947.5 181.6V237.8M948.5 182.3V230.0M949.5 188.5V235.8M950.5 186.7V234.2M951.5 187.0V237.6M952.5 180.4V234.8M953.5 183.9V232.8M954.5 180.4V234.7M955.5 186.4V210.0M956.5 180.7V239.1M957.5 185.0V235.9M958.5 181.9V234.3M959.5 182.9V210.0M960.5 186.5V210.0M961.5 182.6V237.8M962.5 188.7V231.1M963.5 180.8V230.3M964.5 181.0V235.0M965.5 186.9V236.6M966.5 185.3V234.4M967.5 188.1V237.8M968.5 189.0V236.4M969.5 180.6V233.4M970.5 179.5V238.2M971.5 186.4V233.5M972.5 184.2V235.6M973.5 181.6V236.0M974.5 180.1V210.0M975.5 188.3V235.0M976.5 180.5V232.8M977.5 182.8V234.8M978.5 188.4V233.7M979.5 184.1V230.6M980.5 209.0V210.0M981.5 182.3V232.9M982.5 186.4V210.0M983.5 188.3V238.9M984.5 180.3V210.0M985.5 184.9V236.4M986.5 187.5V239.4M987.5 182.3V231.3M988.5 209.0V233.6M989.5 181.4V239.2M990.5 182.3V235.5M991.5 188.4V231.0M992.5 188.4V239.3M993.5 179.3V239.2M994.5 183.5V238.9M995.5 184.4V233.3M996.5 186.8V231.6M997.5 183.8V239.4M998.5 187.4V233.8M999.5 186.2V233.0M1000.5 209.0V234.8M1001.5 182.1V239.0M1002.5 184.0V230.7M1003.5 181.8V235.3M1004.5 182.2V231.2M1005.5 182.1V236.4M1006.5 181.1V237.6M1007.5 179.3V234.6M1008.5 179.1V210.0M1009.5 182.6V230.2M1010.5 187.1V239.7M1011.5 182.7V234.8M1012.5 183.5V240.1M1013.5 187.4V234.4M1014.5 187.3V234.0M1015.5 186.9V236.7M1016.5 187.0V234.6M1017.5 186.9V237.3M1018.5 184.0V234.7M1019.5 179.5V235.0M1020.5 185.6V234.6M1021.5 186.0V233.8M1022.5 188.3V235.2M1023.5 182.6V235.2M1024.5 209.0V210.0M1025.5 186.0V239.8M1026.5 183.9V234.9M1027.5 186.5V231.0M1028.5 179.5V237.6M1029.5 181.6V233.1M1030.5 186.4V232.8M1031.5 181.8V210.0M1032.5 186.4V230.8M1033.5 188.7V237.6M1034.5 181.5V236.0M1035.5 180.1V232.0M1036.5 187.0V238.1M1037.5 179.1V235.4M1038.5 180.5V238.5M1039.5 209.0V231.9M1040.5 180.4V233.7M1041.5 183.3V231.1M1042.5 184.1V233.6M1043.5 186.2V234.9M1044.5 188.3V238.7M1045.5 180.1V238.8M1046.5 187.1V236.9M1047.5 187.5V233.8M1048.5 185.3V210.0M1049.5 184.6V230.6M1050.5 183.3V235.0M1051.5 187.3V238.3M1052.5 184.6V235.1M1053.5 209.0V233.1M1054.5 182.9V234.7M1055.5 182.1V234.6M1056.5 185.3V235.2M1057.5 185.5V232.2M1058.5 180.2V238.9M1059.5 180.1V234.7M1060.5 184.5V230.8M1061.5 178.9V236.6M1062.5 182.1V231.9M1063.5 182.3V239.8M1064.5 178.9V232.2M1065.5 179.1V231.0M1066.5 188.2V210.0M1067.5 188.3V236.6M1068.5 209.0V210.0M1069.5 181.8V238.3M1070.5 185.2V210.0M1071.5 183.9V234.5M1072.5 183.3V232.4M1073.5 181.1V237.0M1074.5 183.0V233.1M1075.5 209.0V236.5M1076.5 209.0V210.0M1077.5 186.1V210.0M1078.5 182.3V230.2M1079.5 182.7V234.9M1080.5 186.5V210.0M1081.5 186.5V233.8M1082.5 183.7V239.0M1083.5 189.0V239.9M1084.5 182.2V230.1M1085.5 188.9V239.0M1086.5 182.2V235.9M1087.5 182.3V239.0M1088.5 182.2V237.4M1089.5 187.9V230.4M1090.5 187.5V235.9M1091.5 209.0V232.6M1092.5 181.5V231.2M1093.5 182.7V230.7M1094.5 183.9V231.6M1095.5 182.3V210.0M1096.5 183.1V236.5M1097.5 187.2V237.5M1098.5 181.6V231.5M1099.5 179.8V237.2M1100.5 187.6V232.1M1101.5 185.4V232.0M1102.5 184.6V239.0M1103.5 184.2V230.6M1104.5 181.6V233.8M1105.5 183.2V240.1M1106.5 179.6V239.3M1107.5 179.5V235.7M1108.5 183.4V230.4M1109.5 179.3V231.2M1110.5 186.6V231.6M1111.5 183.9V234.7M1112.5 183.3V232.0M1113.5 181.3V237.7M1114.5 187.5V231.2M1115.5 209.0V237.9M1116.5 185.3V232.8M1117.5 180.2V238.6M1118.5 181.6V234.8M1119.5 179.0V235.3M1120.5 179.9V233.1M1121.5 181.3V233.6M1122.5 186.7V230.9M1123.5 183.1V238.0M1124.5 185.1V235.3M1125.5 182.7V237.4M1126.5 180.2V233.8M1127.5 183.9V230.0M1128.5 209.0V230.0M1129.5 209.0V210.0M1130.5 209.0V210.0M1131.5 188.5V210.0M1132.5 184.2V234.4M1133.5 182.9V231.5M1134.5 184.4V234.2M1135.5 186.3V234.8M1136.5 185.2V232.9M1137.5 181.9V237.9M1138.5 184.4V239.0M1139.5 209.0V210.0M1140.5 185.3V235.9M1141.5 188.2V231.4M1142.5 186.0V236.3M1143.5 183.5V237.1M1144.5 183.2V230.8M1145.5 209.0V235.3M1146.5 180.4V239.4M1147.5 184.0V233.7M1148.5 183.1V230.6M1149.5 181.2V234.9M1150.5 180.2V210.0M1151.5 186.4V239.9M1152.5 189.1V237.3M1153.5 184.3V237.9M1154.5 186.1V236.1M1155.5 188.0V235.7M1156.5 188.7V231.8M1157.5 188.8V235.0M1158.5 179.1V234.8M1159.5 182.4V239.8M1160.5 185.8V231.4M1161.5 183.2V230.1M1162.5 184.4V237.8M1163.5 179.3V239.7M1164.5 183.9V230.3M1165.5 183.6V232.3M1166.5 180.2V210.0M1167.5 209.0V231.7M1168.5 188.3V237.2M1169.5 182.0V232.7M1170.5 182.8V233.4M1171.5 209.0V233.2M1172.5 183.2V237.5M1173.5 186.9V239.7M1174.5 188.7V232.1M1175.5 209.0V233.9M1176.5 185.0V210.0M1177.5 188.9V230.9M1178.5 187.8V230.5M1179.5 185.5V230.2M1180.5 209.0V230.0M1181.5 182.6V233.6M1182.5 182.9V233.9M1183.5 187.7V234.0M1184.5 185.1V234.4M1185.5 187.3V233.5M1186.5 186.3V231.1M1187.5 185.0V239.3M1188.5 181.3V234.5M1189.5 188.2V233.9M1190.5 187.4V239.7M1191.5 179.0V235.0M1192.5 188.2V238.5M1193.5 185.5V237.9M1194.5 179.3V232.4M1195.5 179.1V230.2M1196.5 184.3V238.7M1197.5 185.2V234.3M1198.5 186.1V236.3M1199.5 209.0V237.5M1200.5 186.3V236.5M1201.5 209.0V234.4M1202.5 185.3V230.3M1203.5 186.7V233.2M1204.5 186.6V239.0M1205.5 181.6V238.4M1206.5 209.0V230.5M1207.5 184.9V234.5M1208.5 180.1V232.9M1209.5 185.6V233.7M1210.5 184.7V230.5M1211.5 187.1V230.8M1212.5 180.2V232.6M1213.5 185.5V210.0M1214.5 182.3V236.0M1215.5 185.3V232.5M1216.5 186.4V231.9M1217.5 182.9V231.6M1218.5 188.3V238.5M1219.5 188.6V230.0M1220.5 186.1V230.1M1221.5 182.7V239.1M1222.5 188.8V237.7M1223.5 180.3V236.6M1224.5 180.8V237.3M1225.5 184.8V231.0M1226.5 183.7V236.3M1227.5 182.3V234.0M1228.5 184.6V234.8M1229.5 190.1V229.8M1230.5 187.1V233.8M1231.5 183.3V236.2M1232.5 184.5V227.5M1233.5 186.8V232.9M1234.5 191.5V233.1M1235.5 189.4V231.1M1236.5 190.5V231.6M1237.5 188.4V226.1M1238.5 190.9V226.2M1239.5 191.8V226.3M1240.5 190.5V230.7M1241.5 189.4V229.4M1242.5 190.0V230.4M1243.5 193.2V227.8M1244.5 190.7V227.8M1245.5 194.5V226.5M1246.5 193.7V224.3M1247.5 191.9V223.2M1248.5 194.4V223.9M1249.5 196.1V226.1M1250.5 193.3V224.8M1251.5 194.0V225.7M1252.5 194.1V222.0M1253.5 197.7V222.8M1254.5 198.6V224.2M1255.5 209.0V210.0M1256.5 196.8V219.8M1257.5 198.5V219.9M1258.5 200.6V220.7M1259.5 197.9V218.5" stroke="#6565d0" stroke-width="1" fill="none" shape-rendering="crispEdges"/><path d="M1321.5 235.0V236.5M1327.5 231.3V245.1M1328.5 181.9V183.0M1330.5 166.0V179.9M1331.5 237.5V250.2M1333.5 175.9V179.7M1335.5 178.4V187.0M1337.5 181.5V187.1M1339.5 180.0V181.2M1341.5 234.9V244.6M1343.5 237.0V248.3M1345.5 185.4V187.6M1346.5 166.5V178.9M1347.5 234.0V240.1M1350.5 180.0V182.4M1350.5 237.0V243.3M1351.5 173.1V187.8M1353.5 232.0V243.4M1355.5 179.3V181.3M1358.5 171.7V180.1M1358.5 236.5V239.6M1360.5 170.8V181.2M1364.5 171.0V183.4M1365.5 238.0V239.7M1368.5 165.9V180.7M1369.5 237.1V243.1M1372.5 169.6V183.8M1376.5 233.4V245.2M1377.5 233.0V238.6M1378.5 173.9V184.3M1382.5 168.5V182.7M1383.5 173.1V186.9M1387.5 178.5V180.0M1387.5 233.4V241.1M1388.5 233.3V235.0M1391.5 232.5V238.9M1393.5 233.9V247.8M1394.5 230.1V235.2M1395.5 231.2V233.8M1397.5 182.5V185.7M1397.5 237.9V241.8M1398.5 180.9V186.1M1399.5 183.2V184.6M1400.5 234.8V245.5M1405.5 231.3V239.1M1406.5 176.3V187.8M1407.5 236.6V238.5M1409.5 184.1V187.5M1410.5 236.6V251.3M1412.5 185.6V187.0M1413.5 239.9V251.6M1415.5 178.5V185.2M1415.5 239.0V250.7M1416.5 234.9V242.1M1417.5 174.2V181.5M1418.5 174.9V187.3M1420.5 174.6V185.3M1421.5 176.2V181.7M1422.5 176.1V188.6M1422.5 233.2V235.9M1424.5 172.7V187.5M1424.5 239.0V245.6M1427.5 167.3V181.0M1427.5 237.6V242.5M1428.5 175.7V181.6M1437.5 235.8V237.1M1440.5 176.1V179.7M1440.5 234.7V237.1M1443.5 178.0V181.2M1446.5 232.7V238.1M1449.5 234.0V235.4M1450.5 177.3V184.2M1450.5 230.4V232.1M1451.5 178.7V186.6M1451.5 239.3V252.6M1452.5 235.7V247.8M1453.5 230.8V239.9M1454.5 173.3V188.0M1454.5 232.6V245.2M1458.5 239.7V249.2M1459.5 173.2V186.7M1459.5 238.8V243.8M1460.5 180.7V181.7M1468.5 177.0V183.1M1471.5 233.6V241.2M1472.5 231.1V239.4M1473.5 182.6V186.8M1474.5 179.9V187.8M1474.5 232.6V242.1M1475.5 171.0V181.5M1477.5 171.1V181.1M1478.5 232.8V247.6M1479.5 231.9V244.0M1487.5 174.0V188.0M1488.5 180.9V184.6M1490.5 180.4V182.2M1492.5 231.1V240.6M1494.5 180.6V182.2M1495.5 230.2V244.8M1498.5 182.4V185.8M1498.5 239.6V249.4M1499.5 237.3V243.2M1500.5 186.4V188.2M1500.5 237.8V242.7M1501.5 178.7V186.1M1502.5 178.1V183.6M1503.5 179.8V188.1M1504.5 170.6V184.0M1505.5 232.8V246.5M1506.5 182.3V188.6M1507.5 235.5V242.0M1508.5 173.5V179.9M1511.5 169.3V184.1M1512.5 177.0V182.9M1512.5 238.8V242.6M1513.5 237.8V246.3M1516.5 177.7V180.7M1517.5 172.7V179.6M1517.5 231.6V234.4M1519.5 235.5V241.7M1521.5 237.2V239.5M1522.5 183.1V188.3M1523.5 184.4V187.3M1523.5 239.4V240.8M1525.5 233.5V238.0M1529.5 233.9V242.8M1530.5 235.2V241.4M1531.5 179.0V188.0M1532.5 235.7V245.7" stroke="#8f90e0" stroke-width="1" fill="none" shape-rendering="crispEdges"/><path d="M1321.5 190.0V235.0M1322.5 209.0V210.0M1323.5 188.4V232.1M1324.5 187.6V230.7M1325.5 180.6V230.2M1326.5 184.9V232.1M1327.5 187.0V231.3M1328.5 183.0V234.2M1329.5 181.7V236.0M1330.5 179.9V232.8M1331.5 180.9V237.5M1332.5 184.5V236.9M1333.5 179.7V238.3M1334.5 179.3V210.0M1335.5 187.0V210.0M1336.5 180.2V237.0M1337.5 187.1V239.5M1338.5 180.0V234.6M1339.5 181.2V232.9M1340.5 179.9V230.5M1341.5 184.0V234.9M1342.5 209.0V210.0M1343.5 179.7V237.0M1344.5 180.4V235.0M1345.5 187.6V234.1M1346.5 178.9V230.9M1347.5 184.7V234.0M1348.5 188.7V230.9M1349.5 209.0V234.2M1350.5 182.4V237.0M1351.5 187.8V232.8M1352.5 184.1V235.8M1353.5 189.0V232.0M1354.5 187.9V238.1M1355.5 181.3V233.3M1356.5 209.0V238.8M1357.5 178.9V236.9M1358.5 180.1V236.5M1359.5 186.1V238.1M1360.5 181.2V231.2M1361.5 181.1V210.0M1362.5 209.0V210.0M1363.5 188.5V231.3M1364.5 183.4V236.8M1365.5 184.2V238.0M1366.5 184.2V234.1M1367.5 180.9V238.4M1368.5 180.7V210.0M1369.5 181.7V237.1M1370.5 185.1V236.3M1371.5 180.0V239.2M1372.5 183.8V229.9M1373.5 209.0V234.3M1374.5 209.0V236.7M1375.5 184.9V236.1M1376.5 179.9V233.4M1377.5 183.3V233.0M1378.5 184.3V238.8M1379.5 188.5V238.3M1380.5 209.0V210.0M1381.5 186.0V210.0M1382.5 182.7V231.3M1383.5 186.9V235.9M1384.5 188.1V233.6M1385.5 186.4V235.9M1386.5 181.3V239.4M1387.5 180.0V233.4M1388.5 184.5V233.3M1389.5 209.0V210.0M1390.5 209.0V235.4M1391.5 183.0V232.5M1392.5 183.3V233.0M1393.5 188.0V233.9M1394.5 188.5V230.1M1395.5 209.0V231.2M1396.5 182.9V232.3M1397.5 185.7V237.9M1398.5 186.1V239.8M1399.5 184.6V235.2M1400.5 186.8V234.8M1401.5 183.6V231.5M1402.5 180.5V235.0M1403.5 179.8V238.5M1404.5 187.4V233.7M1405.5 185.8V231.3M1406.5 187.8V230.3M1407.5 180.3V236.6M1408.5 209.0V239.4M1409.5 187.5V231.5M1410.5 183.7V236.6M1411.5 209.0V239.1M1412.5 187.0V235.1M1413.5 209.0V239.9M1414.5 185.9V239.6M1415.5 185.2V239.0M1416.5 179.2V234.9M1417.5 181.5V232.7M1418.5 187.3V234.0M1419.5 181.7V239.9M1420.5 185.3V237.4M1421.5 181.7V230.1M1422.5 188.6V233.2M1423.5 185.2V235.3M1424.5 187.5V239.0M1425.5 188.8V235.5M1426.5 184.1V230.2M1427.5 181.0V237.6M1428.5 181.6V232.4M1429.5 181.5V234.6M1430.5 180.5V234.9M1431.5 188.1V210.0M1432.5 180.8V230.1M1433.5 178.9V237.4M1434.5 186.2V238.1M1435.5 209.0V238.2M1436.5 182.2V230.8M1437.5 186.1V235.8M1438.5 180.3V234.2M1439.5 185.4V236.6M1440.5 179.7V234.7M1441.5 185.4V239.0M1442.5 183.2V236.1M1443.5 181.2V238.9M1444.5 181.1V232.4M1445.5 186.6V237.0M1446.5 182.0V232.7M1447.5 181.5V237.6M1448.5 180.2V230.5M1449.5 188.8V234.0M1450.5 184.2V230.4M1451.5 186.6V239.3M1452.5 187.0V235.7M1453.5 182.0V230.8M1454.5 188.0V232.6M1455.5 209.0V210.0M1456.5 182.5V230.6M1457.5 184.8V238.9M1458.5 183.6V239.7M1459.5 186.7V238.8M1460.5 181.7V236.8M1461.5 183.0V237.1M1462.5 181.5V239.0M1463.5 186.2V237.9M1464.5 184.7V210.0M1465.5 209.0V233.8M1466.5 209.0V210.0M1467.5 188.6V235.1M1468.5 183.1V235.1M1469.5 185.8V210.0M1470.5 187.5V231.2M1471.5 186.4V233.6M1472.5 181.2V231.1M1473.5 186.8V232.7M1474.5 187.8V232.6M1475.5 181.5V237.6M1476.5 183.7V210.0M1477.5 181.1V238.5M1478.5 182.5V232.8M1479.5 179.5V231.9M1480.5 179.9V236.8M1481.5 180.4V210.0M1482.5 180.4V232.3M1483.5 209.0V210.0M1484.5 179.1V236.3M1485.5 209.0V236.9M1486.5 180.8V237.9M1487.5 188.0V230.4M1488.5 184.6V237.6M1489.5 186.7V238.4M1490.5 182.2V230.6M1491.5 188.6V239.9M1492.5 186.0V231.1M1493.5 179.7V233.4M1494.5 182.2V233.8M1495.5 185.3V230.2M1496.5 189.0V239.9M1497.5 189.1V210.0M1498.5 185.8V239.6M1499.5 184.0V237.3M1500.5 188.2V237.8M1501.5 186.1V210.0M1502.5 183.6V236.2M1503.5 188.1V230.2M1504.5 184.0V236.9M1505.5 179.7V232.8M1506.5 188.6V237.3M1507.5 181.1V235.5M1508.5 179.9V234.0M1509.5 188.5V230.7M1510.5 185.9V236.3M1511.5 184.1V239.6M1512.5 182.9V238.8M1513.5 181.1V237.8M1514.5 209.0V239.9M1515.5 188.9V235.1M1516.5 180.7V236.8M1517.5 179.6V231.6M1518.5 180.8V238.5M1519.5 187.4V235.5M1520.5 182.1V239.9M1521.5 180.4V237.2M1522.5 188.3V234.7M1523.5 187.3V239.4M1524.5 186.3V231.5M1525.5 209.0V233.5M1526.5 181.2V235.9M1527.5 179.9V237.5M1528.5 185.6V235.6M1529.5 186.2V233.9M1530.5 186.6V235.2M1531.5 188.0V234.5M1532.5 183.4V235.7M1533.5 181.5V232.8M1534.5 184.3V236.5M1535.5 186.0V238.9" stroke="#6565d0" stroke-width="1" fill="none" shape-rendering="crispEdges"/></svg><div class="a" style="left:1535px;top:116px;width:1px;height:168px;background:#1d1f29"></div><div class="a" style="left:3px;top:289px;width:1533px;height:148px;background:#1d1f29"></div><div class="a" style="left:4px;top:290px;width:152px;height:146px;background:#f7f7f7"></div><svg class="a" style="left:11px;top:298px" width="10" height="10"><path d="M1 1 L9 9 M9 1 L1 9" fill="none" stroke="#444" stroke-width="1.3"/></svg><div class="t" style="left:29px;top:297px;font-size:13px;color:#222">patreon-ad</div><svg class="a" style="left:120px;top:299px" width="12" height="8"><path d="M1.3 6.5 L6 1.8 L10.7 6.5" fill="none" stroke="#3a3a3a" stroke-width="1.15"/></svg><div class="a" style="left:138.3px;top:301.7px;width:2.4px;height:2.4px;border-radius:50%;background:#4a4a4a"></div><div class="a" style="left:143.9px;top:301.7px;width:2.4px;height:2.4px;border-radius:50%;background:#4a4a4a"></div><div class="a" style="left:149.5px;top:301.7px;width:2.4px;height:2.4px;border-radius:50%;background:#4a4a4a"></div><div class="btn" style="left:8.5px;top:313px;width:69.5px;height:18px;background:#dcdde2"></div><div class="t" style="left:8.5px;width:69.5px;text-align:center;top:317px;font-size:13px">Mute</div><div class="btn" style="left:82px;top:313px;width:70px;height:18px;background:#dcdde2"></div><div class="t" style="left:82px;width:70px;text-align:center;top:317px;font-size:13px">Solo</div><div class="btn" style="left:8.5px;top:335.5px;width:143.5px;height:21.5px;background:#dcdde2"></div><div class="t" style="left:8.5px;width:143.5px;text-align:center;top:340px;font-size:13px">Effects</div><div class="a" style="left:14.5px;top:363.5px;width:5px;height:1.2px;background:#444"></div><div class="t" style="left:139.5px;top:358.5px;font-size:11px;font-weight:bold;color:#333">+</div><div class="a" style="left:14.5px;top:373.5px;width:132.5px;height:2px;background:#c9d3de"></div><div class="a" style="left:14.5px;top:369.5px;width:1px;height:4px;background:#bccbd8"></div><div class="a" style="left:24.6px;top:371.0px;width:1px;height:2.5px;background:#bccbd8"></div><div class="a" style="left:34.7px;top:371.0px;width:1px;height:2.5px;background:#bccbd8"></div><div class="a" style="left:44.8px;top:371.0px;width:1px;height:2.5px;background:#bccbd8"></div><div class="a" style="left:55.0px;top:371.0px;width:1px;height:2.5px;background:#bccbd8"></div><div class="a" style="left:65.1px;top:371.0px;width:1px;height:2.5px;background:#bccbd8"></div><div class="a" style="left:75.2px;top:371.0px;width:1px;height:2.5px;background:#bccbd8"></div><div class="a" style="left:85.3px;top:371.0px;width:1px;height:2.5px;background:#bccbd8"></div><div class="a" style="left:95.4px;top:371.0px;width:1px;height:2.5px;background:#bccbd8"></div><div class="a" style="left:105.5px;top:371.0px;width:1px;height:2.5px;background:#bccbd8"></div><div class="a" style="left:115.7px;top:371.0px;width:1px;height:2.5px;background:#bccbd8"></div><div class="a" style="left:125.8px;top:371.0px;width:1px;height:2.5px;background:#bccbd8"></div><div class="a" style="left:135.9px;top:371.0px;width:1px;height:2.5px;background:#bccbd8"></div><div class="a" style="left:146.0px;top:369.5px;width:1px;height:4px;background:#bccbd8"></div><div class="a" style="left:73.7px;top:368.2px;width:12.6px;height:12.6px;border:1.6px solid #383838;border-radius:50%;background:#f7f7f7"></div><div class="t" style="left:14px;top:389.5px;font-size:9.5px;font-weight:bold;color:#333">L</div><div class="t" style="left:137px;top:389.5px;font-size:9.5px;font-weight:bold;color:#333">R</div><div class="a" style="left:14.5px;top:403.5px;width:132.5px;height:2px;background:#c9d3de"></div><div class="a" style="left:14.5px;top:399.5px;width:1px;height:4px;background:#bccbd8"></div><div class="a" style="left:24.6px;top:401.0px;width:1px;height:2.5px;background:#bccbd8"></div><div class="a" style="left:34.7px;top:401.0px;width:1px;height:2.5px;background:#bccbd8"></div><div class="a" style="left:44.8px;top:401.0px;width:1px;height:2.5px;background:#bccbd8"></div><div class="a" style="left:55.0px;top:401.0px;width:1px;height:2.5px;background:#bccbd8"></div><div class="a" style="left:65.1px;top:401.0px;width:1px;height:2.5px;background:#bccbd8"></div><div class="a" style="left:75.2px;top:401.0px;width:1px;height:2.5px;background:#bccbd8"></div><div class="a" style="left:85.3px;top:401.0px;width:1px;height:2.5px;background:#bccbd8"></div><div class="a" style="left:95.4px;top:401.0px;width:1px;height:2.5px;background:#bccbd8"></div><div class="a" style="left:105.5px;top:401.0px;width:1px;height:2.5px;background:#bccbd8"></div><div class="a" style="left:115.7px;top:401.0px;width:1px;height:2.5px;background:#bccbd8"></div><div class="a" style="left:125.8px;top:401.0px;width:1px;height:2.5px;background:#bccbd8"></div><div class="a" style="left:135.9px;top:401.0px;width:1px;height:2.5px;background:#bccbd8"></div><div class="a" style="left:146.0px;top:399.5px;width:1px;height:4px;background:#bccbd8"></div><div class="a" style="left:73.7px;top:398.2px;width:12.6px;height:12.6px;border:1.6px solid #383838;border-radius:50%;background:#f7f7f7"></div><div class="a" style="left:156px;top:290px;width:1.5px;height:146px;background:#4d4d52"></div><div class="a" style="left:157.5px;top:290px;width:31px;height:146px;background:#f7f7f7"></div><div class="a" style="left:187.5px;top:290px;width:1.2px;height:146px;background:#50525e"></div><div class="a" style="left:158px;top:307.5px;width:30px;height:1px;background:#dcdcdc"></div><div class="t" style="left:140px;width:43px;text-align:right;top:310.5px;font-size:12px;font-weight:bold;color:#222">1.0</div><div class="t" style="left:140px;width:43px;text-align:right;top:333.6px;font-size:12px;font-weight:normal;color:#222">0.5</div><div class="a" style="left:184.5px;top:339.1px;width:3.5px;height:1px;background:#222"></div><div class="t" style="left:140px;width:43px;text-align:right;top:365.8px;font-size:12px;font-weight:bold;color:#222">0.0</div><div class="a" style="left:183px;top:371.2px;width:5px;height:1.5px;background:#222"></div><div class="t" style="left:140px;width:43px;text-align:right;top:397.9px;font-size:12px;font-weight:normal;color:#222">-0.5</div><div class="a" style="left:184.5px;top:403.4px;width:3.5px;height:1px;background:#222"></div><div class="t" style="left:140px;width:43px;text-align:right;top:422.0px;font-size:12px;font-weight:bold;color:#222">-1.0</div><div class="a" style="left:182.5px;top:434.5px;width:5.5px;height:1.5px;background:#222"></div><div class="a" style="left:188.5px;top:290px;width:1348px;height:17.5px;background:#3c3e50"></div><div class="a" style="left:188.5px;top:307.5px;width:1348px;height:128.5px;background:#454859"></div><div class="a" style="left:254.0px;top:290px;width:1px;height:146px;background:#5b5d6e"></div><div class="a" style="left:333.0px;top:290px;width:1px;height:146px;background:#5b5d6e"></div><div class="a" style="left:411.9px;top:290px;width:1px;height:146px;background:#5b5d6e"></div><div class="a" style="left:490.9px;top:290px;width:1px;height:146px;background:#5b5d6e"></div><div class="a" style="left:569.8px;top:290px;width:1px;height:146px;background:#5b5d6e"></div><div class="a" style="left:648.8px;top:290px;width:1px;height:146px;background:#5b5d6e"></div><div class="a" style="left:727.8px;top:290px;width:1px;height:146px;background:#5b5d6e"></div><div class="a" style="left:806.7px;top:290px;width:1px;height:146px;background:#5b5d6e"></div><div class="a" style="left:885.7px;top:290px;width:1px;height:146px;background:#5b5d6e"></div><div class="a" style="left:964.6px;top:290px;width:1px;height:146px;background:#5b5d6e"></div><div class="a" style="left:1043.6px;top:290px;width:1px;height:146px;background:#5b5d6e"></div><div class="a" style="left:1122.6px;top:290px;width:1px;height:146px;background:#5b5d6e"></div><div class="a" style="left:1201.5px;top:290px;width:1px;height:146px;background:#5b5d6e"></div><div class="a" style="left:1280.5px;top:290px;width:1px;height:146px;background:#5b5d6e"></div><div class="a" style="left:1359.4px;top:290px;width:1px;height:146px;background:#5b5d6e"></div><div class="a" style="left:1438.4px;top:290px;width:1px;height:146px;background:#5b5d6e"></div><div class="a" style="left:1517.4px;top:290px;width:1px;height:146px;background:#5b5d6e"></div><div class="a" style="left:1262px;top:292px;width:46px;height:15.5px;background:#cdd4ef;border-radius:4px 4px 0 0"></div><div class="a" style="left:1262px;top:307.5px;width:46px;height:128.5px;background:#eff2fd"></div><div class="t" style="left:1268.5px;top:294px;font-size:12.6px;color:#2a2a2a">patr...</div><svg class="a" style="left:0;top:0" width="1536" height="790"><path d="M1263.5 325.8V334.6M1263.5 405.8V409.2M1267.5 407.8V415.3M1268.5 327.6V336.5M1270.5 320.8V331.8M1271.5 325.7V337.1M1271.5 407.7V413.6M1272.5 324.0V333.0M1273.5 403.5V416.7M1275.5 333.7V335.1M1277.5 406.4V414.2M1279.5 331.9V336.6M1280.5 401.8V410.8M1281.5 409.5V412.4M1284.5 334.3V336.1M1285.5 328.9V333.0M1290.5 327.4V333.7M1290.5 409.3V418.7M1291.5 329.9V333.7M1292.5 324.3V332.5M1292.5 405.2V408.4M1293.5 408.5V412.6M1294.5 330.7V333.4M1296.5 325.8V333.5M1301.5 407.4V417.6M1302.5 322.9V334.6M1302.5 406.5V412.1M1303.5 409.5V416.4M1306.5 328.3V332.3" stroke="#8f90e0" stroke-width="1" fill="none" shape-rendering="crispEdges"/><path d="M1262.5 337.6V403.7M1263.5 334.6V405.8M1264.5 334.6V406.7M1265.5 332.7V407.7M1266.5 335.6V409.4M1267.5 338.1V407.8M1268.5 336.5V407.1M1269.5 331.1V407.4M1270.5 331.8V409.3M1271.5 337.1V407.7M1272.5 333.0V403.4M1273.5 330.4V403.5M1274.5 333.1V410.1M1275.5 335.1V402.4M1276.5 335.8V405.9M1277.5 336.5V406.4M1278.5 333.2V407.5M1279.5 336.6V406.0M1280.5 334.9V401.8M1281.5 335.0V409.5M1282.5 337.5V406.4M1283.5 330.1V409.0M1284.5 336.1V405.8M1285.5 333.0V406.7M1286.5 337.6V403.1M1287.5 335.4V403.4M1288.5 335.4V403.6M1289.5 334.7V407.5M1290.5 333.7V409.3M1291.5 333.7V401.8M1292.5 332.5V405.2M1293.5 334.0V408.5M1294.5 333.4V410.0M1295.5 333.5V407.4M1296.5 333.5V407.4M1297.5 334.2V401.9M1298.5 332.8V405.1M1299.5 330.8V409.3M1300.5 334.9V404.0M1301.5 334.1V407.4M1302.5 334.6V406.5M1303.5 333.0V409.5M1304.5 336.6V405.3M1305.5 332.8V407.5M1306.5 332.3V406.1" stroke="#6565d0" stroke-width="1" fill="none" shape-rendering="crispEdges"/></svg><div class="a" style="left:1535px;top:290px;width:1px;height:146px;background:#1d1f29"></div><div class="a" style="left:0;top:437.5px;width:1536px;height:250.5px;background:#6a7de2"></div><div class="a" style="left:3.3px;top:441.5px;width:1533px;height:243.5px;background:#1d1f29"></div><div class="a" style="left:4px;top:442px;width:152px;height:242px;background:#dbe6fb"></div><svg class="a" style="left:11px;top:450px" width="10" height="10"><path d="M1 1 L9 9 M9 1 L1 9" fill="none" stroke="#444" stroke-width="1.3"/></svg><div class="t" style="left:29px;top:449px;font-size:13px;color:#222">ES_Highland...</div><svg class="a" style="left:120px;top:451px" width="12" height="8"><path d="M1.3 6.5 L6 1.8 L10.7 6.5" fill="none" stroke="#3a3a3a" stroke-width="1.15"/></svg><div class="a" style="left:138.3px;top:453.7px;width:2.4px;height:2.4px;border-radius:50%;background:#4a4a4a"></div><div class="a" style="left:143.9px;top:453.7px;width:2.4px;height:2.4px;border-radius:50%;background:#4a4a4a"></div><div class="a" style="left:149.5px;top:453.7px;width:2.4px;height:2.4px;border-radius:50%;background:#4a4a4a"></div><div class="btn" style="left:8.5px;top:465px;width:69.5px;height:18px;background:#c5d3e3"></div><div class="t" style="left:8.5px;width:69.5px;text-align:center;top:469px;font-size:13px">Mute</div><div class="btn" style="left:82px;top:465px;width:70px;height:18px;background:#c5d3e3"></div><div class="t" style="left:82px;width:70px;text-align:center;top:469px;font-size:13px">Solo</div><div class="btn" style="left:8.5px;top:487.5px;width:143.5px;height:21.5px;background:#c5d3e3"></div><div class="t" style="left:8.5px;width:143.5px;text-align:center;top:492px;font-size:13px">Effects</div><div class="a" style="left:14.5px;top:515.5px;width:5px;height:1.2px;background:#444"></div><div class="t" style="left:139.5px;top:510.5px;font-size:11px;font-weight:bold;color:#333">+</div><div class="a" style="left:14.5px;top:525.5px;width:132.5px;height:2px;background:#c8d2dc"></div><div class="a" style="left:14.5px;top:521.5px;width:1px;height:4px;background:#bccbd8"></div><div class="a" style="left:24.6px;top:523.0px;width:1px;height:2.5px;background:#bccbd8"></div><div class="a" style="left:34.7px;top:523.0px;width:1px;height:2.5px;background:#bccbd8"></div><div class="a" style="left:44.8px;top:523.0px;width:1px;height:2.5px;background:#bccbd8"></div><div class="a" style="left:55.0px;top:523.0px;width:1px;height:2.5px;background:#bccbd8"></div><div class="a" style="left:65.1px;top:523.0px;width:1px;height:2.5px;background:#bccbd8"></div><div class="a" style="left:75.2px;top:523.0px;width:1px;height:2.5px;background:#bccbd8"></div><div class="a" style="left:85.3px;top:523.0px;width:1px;height:2.5px;background:#bccbd8"></div><div class="a" style="left:95.4px;top:523.0px;width:1px;height:2.5px;background:#bccbd8"></div><div class="a" style="left:105.5px;top:523.0px;width:1px;height:2.5px;background:#bccbd8"></div><div class="a" style="left:115.7px;top:523.0px;width:1px;height:2.5px;background:#bccbd8"></div><div class="a" style="left:125.8px;top:523.0px;width:1px;height:2.5px;background:#bccbd8"></div><div class="a" style="left:135.9px;top:523.0px;width:1px;height:2.5px;background:#bccbd8"></div><div class="a" style="left:146.0px;top:521.5px;width:1px;height:4px;background:#bccbd8"></div><div class="a" style="left:73.7px;top:520.2px;width:12.6px;height:12.6px;border:1.6px solid #383838;border-radius:50%;background:#f4f6fb"></div><div class="t" style="left:14px;top:541.5px;font-size:9.5px;font-weight:bold;color:#333">L</div><div class="t" style="left:137px;top:541.5px;font-size:9.5px;font-weight:bold;color:#333">R</div><div class="a" style="left:14.5px;top:555.5px;width:132.5px;height:2px;background:#c8d2dc"></div><div class="a" style="left:14.5px;top:551.5px;width:1px;height:4px;background:#bccbd8"></div><div class="a" style="left:24.6px;top:553.0px;width:1px;height:2.5px;background:#bccbd8"></div><div class="a" style="left:34.7px;top:553.0px;width:1px;height:2.5px;background:#bccbd8"></div><div class="a" style="left:44.8px;top:553.0px;width:1px;height:2.5px;background:#bccbd8"></div><div class="a" style="left:55.0px;top:553.0px;width:1px;height:2.5px;background:#bccbd8"></div><div class="a" style="left:65.1px;top:553.0px;width:1px;height:2.5px;background:#bccbd8"></div><div class="a" style="left:75.2px;top:553.0px;width:1px;height:2.5px;background:#bccbd8"></div><div class="a" style="left:85.3px;top:553.0px;width:1px;height:2.5px;background:#bccbd8"></div><div class="a" style="left:95.4px;top:553.0px;width:1px;height:2.5px;background:#bccbd8"></div><div class="a" style="left:105.5px;top:553.0px;width:1px;height:2.5px;background:#bccbd8"></div><div class="a" style="left:115.7px;top:553.0px;width:1px;height:2.5px;background:#bccbd8"></div><div class="a" style="left:125.8px;top:553.0px;width:1px;height:2.5px;background:#bccbd8"></div><div class="a" style="left:135.9px;top:553.0px;width:1px;height:2.5px;background:#bccbd8"></div><div class="a" style="left:146.0px;top:551.5px;width:1px;height:4px;background:#bccbd8"></div><div class="a" style="left:73.7px;top:550.2px;width:12.6px;height:12.6px;border:1.6px solid #383838;border-radius:50%;background:#f4f6fb"></div><div class="a" style="left:156px;top:442px;width:1.5px;height:242px;background:#4d4d52"></div><div class="a" style="left:157.5px;top:442px;width:31px;height:242px;background:#dbe6fb"></div><div class="a" style="left:187.5px;top:442px;width:1.2px;height:242px;background:#50525e"></div><div class="a" style="left:158px;top:460px;width:30px;height:1px;background:#c9d3e3"></div><div class="t" style="left:140px;width:43px;text-align:right;top:463.0px;font-size:12px;font-weight:bold;color:#222">1.0</div><div class="t" style="left:140px;width:43px;text-align:right;top:481.5px;font-size:12px;font-weight:normal;color:#222">0.5</div><div class="a" style="left:184.5px;top:487.0px;width:3.5px;height:1px;background:#222"></div><div class="t" style="left:140px;width:43px;text-align:right;top:509.0px;font-size:12px;font-weight:bold;color:#222">0.0</div><div class="a" style="left:183px;top:514.5px;width:5px;height:1.5px;background:#222"></div><div class="t" style="left:140px;width:43px;text-align:right;top:536.5px;font-size:12px;font-weight:normal;color:#222">-0.5</div><div class="a" style="left:184.5px;top:542.0px;width:3.5px;height:1px;background:#222"></div><div class="t" style="left:140px;width:43px;text-align:right;top:556.0px;font-size:12px;font-weight:bold;color:#222">-1.0</div><div class="a" style="left:182.5px;top:568.5px;width:5.5px;height:1.5px;background:#222"></div><div class="t" style="left:140px;width:43px;text-align:right;top:574.0px;font-size:12px;font-weight:bold;color:#222">1.0</div><div class="t" style="left:140px;width:43px;text-align:right;top:593.2px;font-size:12px;font-weight:normal;color:#222">0.5</div><div class="a" style="left:184.5px;top:598.8px;width:3.5px;height:1px;background:#222"></div><div class="t" style="left:140px;width:43px;text-align:right;top:621.5px;font-size:12px;font-weight:bold;color:#222">0.0</div><div class="a" style="left:183px;top:627.0px;width:5px;height:1.5px;background:#222"></div><div class="t" style="left:140px;width:43px;text-align:right;top:649.8px;font-size:12px;font-weight:normal;color:#222">-0.5</div><div class="a" style="left:184.5px;top:655.2px;width:3.5px;height:1px;background:#222"></div><div class="t" style="left:140px;width:43px;text-align:right;top:670.0px;font-size:12px;font-weight:bold;color:#222">-1.0</div><div class="a" style="left:182.5px;top:682.5px;width:5.5px;height:1.5px;background:#222"></div><div class="a" style="left:188.5px;top:442px;width:1348px;height:18px;background:#3c3e50"></div><div class="a" style="left:188.5px;top:460px;width:1348px;height:224px;background:#454859"></div><div class="a" style="left:254.0px;top:442px;width:1px;height:242px;background:#5b5d6e"></div><div class="a" style="left:333.0px;top:442px;width:1px;height:242px;background:#5b5d6e"></div><div class="a" style="left:411.9px;top:442px;width:1px;height:242px;background:#5b5d6e"></div><div class="a" style="left:490.9px;top:442px;width:1px;height:242px;background:#5b5d6e"></div><div class="a" style="left:569.8px;top:442px;width:1px;height:242px;background:#5b5d6e"></div><div class="a" style="left:648.8px;top:442px;width:1px;height:242px;background:#5b5d6e"></div><div class="a" style="left:727.8px;top:442px;width:1px;height:242px;background:#5b5d6e"></div><div class="a" style="left:806.7px;top:442px;width:1px;height:242px;background:#5b5d6e"></div><div class="a" style="left:885.7px;top:442px;width:1px;height:242px;background:#5b5d6e"></div><div class="a" style="left:964.6px;top:442px;width:1px;height:242px;background:#5b5d6e"></div><div class="a" style="left:1043.6px;top:442px;width:1px;height:242px;background:#5b5d6e"></div><div class="a" style="left:1122.6px;top:442px;width:1px;height:242px;background:#5b5d6e"></div><div class="a" style="left:1201.5px;top:442px;width:1px;height:242px;background:#5b5d6e"></div><div class="a" style="left:1280.5px;top:442px;width:1px;height:242px;background:#5b5d6e"></div><div class="a" style="left:1359.4px;top:442px;width:1px;height:242px;background:#5b5d6e"></div><div class="a" style="left:1438.4px;top:442px;width:1px;height:242px;background:#5b5d6e"></div><div class="a" style="left:1517.4px;top:442px;width:1px;height:242px;background:#5b5d6e"></div><div class="a" style="left:158px;top:570px;width:1378px;height:1.2px;background:#1a1a1a"></div><div class="a" style="left:188.5px;top:444px;width:59.5px;height:15.5px;background:#cdd4ef;border-radius:0px 4px 0 0"></div><div class="a" style="left:188.5px;top:459.5px;width:59.5px;height:224.5px;background:#eff2fd"></div><div class="t" style="left:195.0px;top:445.5px;font-size:12.6px;color:#2a2a2a">ES_Hi...</div><div class="a" style="left:1320px;top:442px;width:1px;height:242px;background:#1a1a1a"></div><div class="a" style="left:1535px;top:442px;width:1px;height:242px;background:#1d1f29"></div><svg class="a" style="left:0;top:0" width="1536" height="790"><path d="M188.5 460.0V571.0M189.5 460.0V571.0M190.5 460.0V571.0M191.5 460.0V571.0M192.5 460.0V571.0M193.5 460.0V571.0M194.5 460.0V571.0M195.5 460.0V571.0M196.5 460.0V571.0M197.5 460.0V571.0M198.5 460.0V571.0M199.5 460.0V571.0M200.5 460.0V571.0M201.5 460.0V571.0M202.5 460.0V571.0M203.5 460.0V571.0M204.5 460.0V571.0M205.5 460.0V571.0M206.5 460.0V571.0M207.5 460.0V571.0M208.5 460.0V571.0M209.5 460.0V571.0M210.5 460.0V571.0M211.5 460.0V571.0M212.5 460.0V571.0M213.5 460.0V571.0M214.5 460.0V571.0M215.5 460.0V571.0M216.5 460.0V571.0M217.5 460.0V571.0M218.5 460.0V571.0M219.5 460.0V571.0M220.5 460.0V571.0M221.5 460.0V541.8M222.5 480.3V541.7M223.5 460.0V571.0M224.5 479.7V571.0M225.5 460.0V571.0M226.5 478.2V571.0M227.5 476.6V562.4M228.5 473.6V571.0M229.5 468.2V571.0M230.5 472.9V553.0M231.5 485.4V560.6M232.5 486.8V571.0M233.5 470.6V548.5M234.5 460.0V571.0M235.5 460.0V540.8M236.5 460.0V561.6M237.5 466.8V563.9M238.5 460.0V559.0M239.5 460.0V571.0M240.5 460.0V556.5M241.5 473.2V571.0M242.5 470.6V550.2M243.5 473.3V558.3M244.5 479.6V541.2M245.5 494.4V538.3M246.5 503.4V528.2M247.5 510.1V520.9" stroke="#6565d0" stroke-width="1" fill="none" shape-rendering="crispEdges"/><path d="M188.5 571.0V684.0M189.5 571.0V684.0M190.5 571.0V684.0M191.5 571.0V684.0M192.5 571.0V684.0M193.5 571.0V684.0M194.5 571.0V684.0M195.5 571.0V684.0M196.5 571.0V684.0M197.5 571.0V684.0M198.5 571.0V684.0M199.5 571.0V684.0M200.5 571.0V684.0M201.5 571.0V684.0M202.5 571.0V684.0M203.5 571.0V684.0M204.5 571.0V684.0M205.5 571.0V684.0M206.5 571.0V684.0M207.5 571.0V684.0M208.5 571.0V684.0M209.5 571.0V684.0M210.5 571.0V684.0M211.5 571.0V684.0M212.5 571.0V684.0M213.5 571.0V684.0M214.5 571.0V684.0M215.5 571.0V684.0M216.5 571.0V684.0M217.5 571.0V684.0M218.5 571.0V684.0M219.5 571.0V684.0M220.5 571.0V662.3M221.5 577.0V684.0M222.5 571.0V670.2M223.5 600.8V684.0M224.5 577.2V684.0M225.5 571.0V658.2M226.5 571.0V668.9M227.5 597.3V684.0M228.5 571.0V684.0M229.5 580.1V664.1M230.5 571.0V663.6M231.5 571.0V684.0M232.5 571.0V684.0M233.5 579.3V660.9M234.5 571.0V675.0M235.5 571.0V684.0M236.5 596.0V684.0M237.5 601.9V684.0M238.5 571.0V684.0M239.5 595.7V684.0M240.5 595.1V684.0M241.5 588.3V684.0M242.5 571.0V684.0M243.5 576.9V664.4M244.5 590.0V661.2M245.5 607.0V653.3M246.5 611.7V638.1M247.5 622.1V632.0" stroke="#6565d0" stroke-width="1" fill="none" shape-rendering="crispEdges"/></svg><div class="a" style="left:0;top:694px;width:1536px;height:17px;background:#f0f0f0"></div><div class="a" style="left:287px;top:702px;width:603px;height:2.5px;background:#8a8a8a;border-radius:1px"></div><div class="a" style="left:0;top:711px;width:1536px;height:66px;background:#f8f8f8;border-bottom:1px solid #dedede"></div><div class="a" style="left:0;top:777px;width:1536px;height:13px;background:#f0f0f0"></div><div class="a" style="left:8.5px;top:779px;width:1px;height:11px;background:#d8d8d8"></div><div class="a" style="left:182px;top:779px;width:1px;height:11px;background:#d8d8d8"></div><div class="a" style="left:1375.5px;top:779px;width:1.5px;height:11px;background:#dadada"></div><div class="t" style="left:13px;top:784.5px;font-size:12px">Stopped</div><div class="a dot" style="left:2px;top:737px"></div><div class="a dot" style="left:7px;top:737px"></div><div class="a dot" style="left:2px;top:742px"></div><div class="a dot" style="left:7px;top:742px"></div><div class="a dot" style="left:2px;top:747px"></div><div class="a dot" style="left:7px;top:747px"></div><div class="t" style="left:16.5px;top:724px;font-size:12.5px">Tempo</div><div class="t" style="left:83.5px;top:724px;font-size:12.5px">Time Signature</div><div class="a" style="left:17.5px;top:744px;width:41.5px;height:21.5px;background:#fff;border-bottom:1.5px solid #a8a8a8;box-shadow:0 0 0 1px #ececec"></div><div class="t" style="left:23px;top:749px;font-size:12.5px">120</div><div class="a" style="left:61.5px;top:744px;width:14.5px;height:10px;background:#e6e6e6;border:1px solid #c8c8c8"></div><div class="a" style="left:61.5px;top:755px;width:14.5px;height:10px;background:#e6e6e6;border:1px solid #c8c8c8"></div><svg class="a" style="left:61.5px;top:744px" width="15" height="21"><path d="M4.5 6.5 L7.25 3.5 L10 6.5Z M4.5 14 L7.25 17 L10 14Z" fill="#111"/></svg><div class="a" style="left:84px;top:744px;width:31.5px;height:21.5px;background:#fff;border-bottom:1.5px solid #a8a8a8;box-shadow:0 0 0 1px #ececec"></div><div class="t" style="left:89px;top:749px;font-size:12.5px">4</div><div class="a" style="left:118px;top:744px;width:14.5px;height:10px;background:#e6e6e6;border:1px solid #c8c8c8"></div><div class="a" style="left:118px;top:755px;width:14.5px;height:10px;background:#e6e6e6;border:1px solid #c8c8c8"></div><svg class="a" style="left:118px;top:744px" width="15" height="21"><path d="M4.5 6.5 L7.25 3.5 L10 6.5Z M4.5 14 L7.25 17 L10 14Z" fill="#111"/></svg><div class="t" style="left:139px;top:747px;font-size:13px">/</div><div class="a" style="left:150px;top:743px;width:49.5px;height:22.5px;background:#fff;border:1px solid #dcdcdc;border-radius:2px"></div><div class="t" style="left:153.5px;top:749px;font-size:12.5px">4</div><svg class="a" style="left:185px;top:750px" width="12" height="8"><path d="M1 1.5 L5.5 6 L10 1.5" fill="none" stroke="#555" stroke-width="1.1"/></svg><div class="a dot" style="left:213px;top:737px"></div><div class="a dot" style="left:218px;top:737px"></div><div class="a dot" style="left:213px;top:742px"></div><div class="a dot" style="left:218px;top:742px"></div><div class="a dot" style="left:213px;top:747px"></div><div class="a dot" style="left:218px;top:747px"></div><div class="a" style="left:227.5px;top:722.3px;width:13px;height:13px;border:1.5px solid #8a8a8a;border-radius:2.5px;background:#f4f4f4"></div><div class="t" style="left:243px;top:723px;font-size:12.5px">Snap</div><div class="a" style="left:227.5px;top:742.7px;width:152px;height:23px;border:1.5px solid #a6a6a6;border-radius:3px;background:#fff"></div><div class="a" style="left:232px;top:747px;width:127px;height:14.5px;background:#efefef"></div><div class="t" style="left:233px;top:748.5px;font-size:12.5px;color:#888">1/8</div><svg class="a" style="left:365px;top:750px" width="12" height="8"><path d="M1 1.5 L5.5 6 L10 1.5" fill="none" stroke="#aaa" stroke-width="1.1"/></svg><div class="a dot" style="left:388px;top:737px"></div><div class="a dot" style="left:393px;top:737px"></div><div class="a dot" style="left:388px;top:742px"></div><div class="a dot" style="left:393px;top:742px"></div><div class="a dot" style="left:388px;top:747px"></div><div class="a dot" style="left:393px;top:747px"></div><div class="a" style="left:399px;top:723.5px;width:233px;height:40px;border:1px solid #c8c8cc;background:#333545;box-shadow:inset 0 0 0 1px #f0f0f0"></div><div class="t" style="left:404.4px;top:731px;font-size:29px;color:#ececf0">0</div><div class="t" style="left:425px;top:731px;font-size:29px;color:#ececf0">0</div><div class="t" style="left:451px;top:731px;font-size:29px;color:#ececf0">h</div><div class="t" style="left:477px;top:731px;font-size:29px;color:#ececf0">1</div><div class="t" style="left:497.5px;top:731px;font-size:29px;color:#ececf0">7</div><div class="t" style="left:522.5px;top:731px;font-size:29px;color:#ececf0">m</div><div class="t" style="left:555px;top:731px;font-size:29px;color:#ececf0">3</div><div class="t" style="left:576px;top:731px;font-size:29px;color:#ececf0">5</div><div class="t" style="left:601px;top:731px;font-size:29px;color:#ececf0">s</div><svg class="a" style="left:621px;top:741px" width="10" height="8"><path d="M0.5 1 L8.5 1 L4.5 6Z" fill="#fff"/></svg><div class="a" style="left:635.5px;top:716px;width:1px;height:55px;background:#e0e0e0"></div><div class="a" style="left:638px;top:716px;width:1px;height:55px;background:#e0e0e0"></div><div class="a dot" style="left:642px;top:737px"></div><div class="a dot" style="left:647px;top:737px"></div><div class="a dot" style="left:642px;top:742px"></div><div class="a dot" style="left:647px;top:742px"></div><div class="a dot" style="left:642px;top:747px"></div><div class="a dot" style="left:647px;top:747px"></div><div class="t" style="left:656.5px;top:719.5px;font-size:12px">Selection</div><div class="btn" style="left:685px;top:742px;width:23px;height:22.5px"></div><svg class="a" style="left:0;top:700px" width="1536" height="90"><path d="M703.45 53.30L703.43 53.66L703.38 54.02L703.24 54.37L702.89 54.66L702.20 54.83L701.51 54.93L701.14 55.08L700.96 55.29L700.83 55.50L700.70 55.72L700.57 55.94L700.45 56.17L700.37 56.43L700.41 56.82L700.67 57.47L700.87 58.16L700.80 58.60L700.57 58.90L700.28 59.12L699.98 59.32L699.65 59.49L699.31 59.62L698.95 59.67L698.52 59.52L698.03 59.00L697.59 58.45L697.28 58.21L697.01 58.16L696.75 58.15L696.50 58.15L696.25 58.15L695.99 58.16L695.72 58.21L695.41 58.45L694.97 59.00L694.48 59.52L694.05 59.67L693.69 59.62L693.35 59.49L693.02 59.32L692.72 59.12L692.43 58.90L692.20 58.60L692.13 58.16L692.33 57.47L692.59 56.82L692.63 56.43L692.55 56.17L692.43 55.94L692.30 55.72L692.17 55.50L692.04 55.29L691.86 55.08L691.49 54.93L690.80 54.83L690.11 54.66L689.76 54.37L689.62 54.02L689.57 53.66L689.55 53.30L689.57 52.94L689.62 52.58L689.76 52.23L690.11 51.94L690.80 51.77L691.49 51.67L691.86 51.52L692.04 51.31L692.17 51.10L692.30 50.88L692.43 50.66L692.55 50.43L692.63 50.17L692.59 49.78L692.33 49.13L692.13 48.44L692.20 48.00L692.43 47.70L692.72 47.48L693.02 47.28L693.35 47.11L693.69 46.98L694.05 46.93L694.48 47.08L694.97 47.60L695.41 48.15L695.72 48.39L695.99 48.44L696.25 48.45L696.50 48.45L696.75 48.45L697.01 48.44L697.28 48.39L697.59 48.15L698.03 47.60L698.52 47.08L698.95 46.93L699.31 46.98L699.65 47.11L699.98 47.28L700.28 47.48L700.57 47.70L700.80 48.00L700.87 48.44L700.67 49.13L700.41 49.78L700.37 50.17L700.45 50.43L700.57 50.66L700.70 50.88L700.83 51.10L700.96 51.31L701.14 51.52L701.51 51.67L702.20 51.77L702.89 51.94L703.24 52.23L703.38 52.58L703.43 52.94L703.45 53.30Z" fill="none" stroke="#3d3d3d" stroke-width="1.35"/><circle cx="696.5" cy="53.3" r="1.9" fill="none" stroke="#3d3d3d" stroke-width="1.35"/></svg><div class="a" style="left:714.5px;top:717.4px;width:166px;height:22.5px;border:1px solid #c8c8cc;background:#333545;box-shadow:inset 0 0 0 1px #f0f0f0"></div><div class="t" style="left:719.6px;top:722.9px;font-size:14.5px;color:#eeeeee;transform:scaleX(0.82);transform-origin:0 0">0</div><div class="t" style="left:730px;top:722.9px;font-size:14.5px;color:#eeeeee;transform:scaleX(0.82);transform-origin:0 0">0</div><div class="t" style="left:742px;top:722.9px;font-size:14.5px;color:#eeeeee;transform:scaleX(0.82);transform-origin:0 0">h</div><div class="t" style="left:756px;top:722.9px;font-size:14.5px;color:#eeeeee;transform:scaleX(0.82);transform-origin:0 0">1</div><div class="t" style="left:767px;top:722.9px;font-size:14.5px;color:#eeeeee;transform:scaleX(0.82);transform-origin:0 0">7</div><div class="t" style="left:778px;top:722.9px;font-size:14.5px;color:#eeeeee;transform:scaleX(0.82);transform-origin:0 0">m</div><div class="t" style="left:795px;top:722.9px;font-size:14.5px;color:#eeeeee;transform:scaleX(0.82);transform-origin:0 0">3</div><div class="t" style="left:806px;top:722.9px;font-size:14.5px;color:#eeeeee;transform:scaleX(0.82);transform-origin:0 0">5</div><div class="t" style="left:815px;top:722.9px;font-size:14.5px;color:#eeeeee;transform:scaleX(0.82);transform-origin:0 0">.</div><div class="t" style="left:822px;top:722.9px;font-size:14.5px;color:#eeeeee;transform:scaleX(0.82);transform-origin:0 0">4</div><div class="t" style="left:833px;top:722.9px;font-size:14.5px;color:#eeeeee;transform:scaleX(0.82);transform-origin:0 0">6</div><div class="t" style="left:844px;top:722.9px;font-size:14.5px;color:#eeeeee;transform:scaleX(0.82);transform-origin:0 0">9</div><div class="t" style="left:855px;top:722.9px;font-size:14.5px;color:#eeeeee;transform:scaleX(0.82);transform-origin:0 0">s</div><svg class="a" style="left:866px;top:726.4px" width="12" height="8"><path d="M0.5 0.5 L10 0.5 L5.25 5.5Z" fill="#fff"/></svg><div class="a" style="left:714.5px;top:742.5px;width:166px;height:22.5px;border:1px solid #c8c8cc;background:#333545;box-shadow:inset 0 0 0 1px #f0f0f0"></div><div class="t" style="left:719.6px;top:748.0px;font-size:14.5px;color:#eeeeee;transform:scaleX(0.82);transform-origin:0 0">0</div><div class="t" style="left:730px;top:748.0px;font-size:14.5px;color:#eeeeee;transform:scaleX(0.82);transform-origin:0 0">0</div><div class="t" style="left:742px;top:748.0px;font-size:14.5px;color:#eeeeee;transform:scaleX(0.82);transform-origin:0 0">h</div><div class="t" style="left:756px;top:748.0px;font-size:14.5px;color:#eeeeee;transform:scaleX(0.82);transform-origin:0 0">1</div><div class="t" style="left:767px;top:748.0px;font-size:14.5px;color:#eeeeee;transform:scaleX(0.82);transform-origin:0 0">7</div><div class="t" style="left:778px;top:748.0px;font-size:14.5px;color:#eeeeee;transform:scaleX(0.82);transform-origin:0 0">m</div><div class="t" style="left:795px;top:748.0px;font-size:14.5px;color:#eeeeee;transform:scaleX(0.82);transform-origin:0 0">3</div><div class="t" style="left:806px;top:748.0px;font-size:14.5px;color:#eeeeee;transform:scaleX(0.82);transform-origin:0 0">5</div><div class="t" style="left:815px;top:748.0px;font-size:14.5px;color:#eeeeee;transform:scaleX(0.82);transform-origin:0 0">.</div><div class="t" style="left:822px;top:748.0px;font-size:14.5px;color:#eeeeee;transform:scaleX(0.82);transform-origin:0 0">4</div><div class="t" style="left:833px;top:748.0px;font-size:14.5px;color:#eeeeee;transform:scaleX(0.82);transform-origin:0 0">6</div><div class="t" style="left:844px;top:748.0px;font-size:14.5px;color:#eeeeee;transform:scaleX(0.82);transform-origin:0 0">9</div><div class="t" style="left:855px;top:748.0px;font-size:14.5px;color:#eeeeee;transform:scaleX(0.82);transform-origin:0 0">s</div><svg class="a" style="left:866px;top:751.5px" width="12" height="8"><path d="M0.5 0.5 L10 0.5 L5.25 5.5Z" fill="#fff"/></svg><div class="a" style="left:880px;top:717px;width:1px;height:48px;background:#c8c8c8"></div><div class="a dot" style="left:888px;top:720px"></div><div class="a dot" style="left:893px;top:720px"></div><div class="a dot" style="left:888px;top:725px"></div><div class="a dot" style="left:893px;top:725px"></div><div class="a dot" style="left:888px;top:730px"></div><div class="a dot" style="left:893px;top:730px"></div><div class="btn" style="left:898px;top:714.3px;width:27px;height:27px"></div><svg class="a" style="left:900px;top:716px" width="22" height="22"><path d="M4.5 4.5 L18 11.5 L4.5 18.5Z" fill="#4b8a6b" stroke="#4b8a6b" stroke-linejoin="round"/></svg><div class="a" style="left:930.5px;top:722px;width:5px;height:1.5px;background:#333"></div><div class="t" style="left:1060px;top:717px;font-size:11px;font-weight:bold">+</div><div class="a" style="left:930.5px;top:731.5px;width:139.5px;height:2px;background:#c6d2de"></div><div class="a" style="left:930.5px;top:728.5px;width:1px;height:3px;background:#c6d2de"></div><div class="a" style="left:940.5px;top:728.5px;width:1px;height:3px;background:#c6d2de"></div><div class="a" style="left:950.4px;top:728.5px;width:1px;height:3px;background:#c6d2de"></div><div class="a" style="left:960.4px;top:728.5px;width:1px;height:3px;background:#c6d2de"></div><div class="a" style="left:970.4px;top:728.5px;width:1px;height:3px;background:#c6d2de"></div><div class="a" style="left:980.3px;top:728.5px;width:1px;height:3px;background:#c6d2de"></div><div class="a" style="left:990.3px;top:728.5px;width:1px;height:3px;background:#c6d2de"></div><div class="a" style="left:1000.2px;top:728.5px;width:1px;height:3px;background:#c6d2de"></div><div class="a" style="left:1010.2px;top:728.5px;width:1px;height:3px;background:#c6d2de"></div><div class="a" style="left:1020.2px;top:728.5px;width:1px;height:3px;background:#c6d2de"></div><div class="a" style="left:1030.1px;top:728.5px;width:1px;height:3px;background:#c6d2de"></div><div class="a" style="left:1040.1px;top:728.5px;width:1px;height:3px;background:#c6d2de"></div><div class="a" style="left:1050.1px;top:728.5px;width:1px;height:3px;background:#c6d2de"></div><div class="a" style="left:1060.0px;top:728.5px;width:1px;height:3px;background:#c6d2de"></div><div class="a" style="left:1070.0px;top:728.5px;width:1px;height:3px;background:#c6d2de"></div><div class="a" style="left:971px;top:725.5px;width:12px;height:12px;border:1.5px solid #333;border-radius:50%;background:#f8f8f8"></div><div class="a" style="left:1077px;top:716px;width:1px;height:28px;background:#e0e0e0"></div><div class="a" style="left:1079.5px;top:716px;width:1px;height:28px;background:#e0e0e0"></div><div class="a" style="left:887px;top:744px;width:649px;height:1px;background:#e3e3e3"></div></body></html>
